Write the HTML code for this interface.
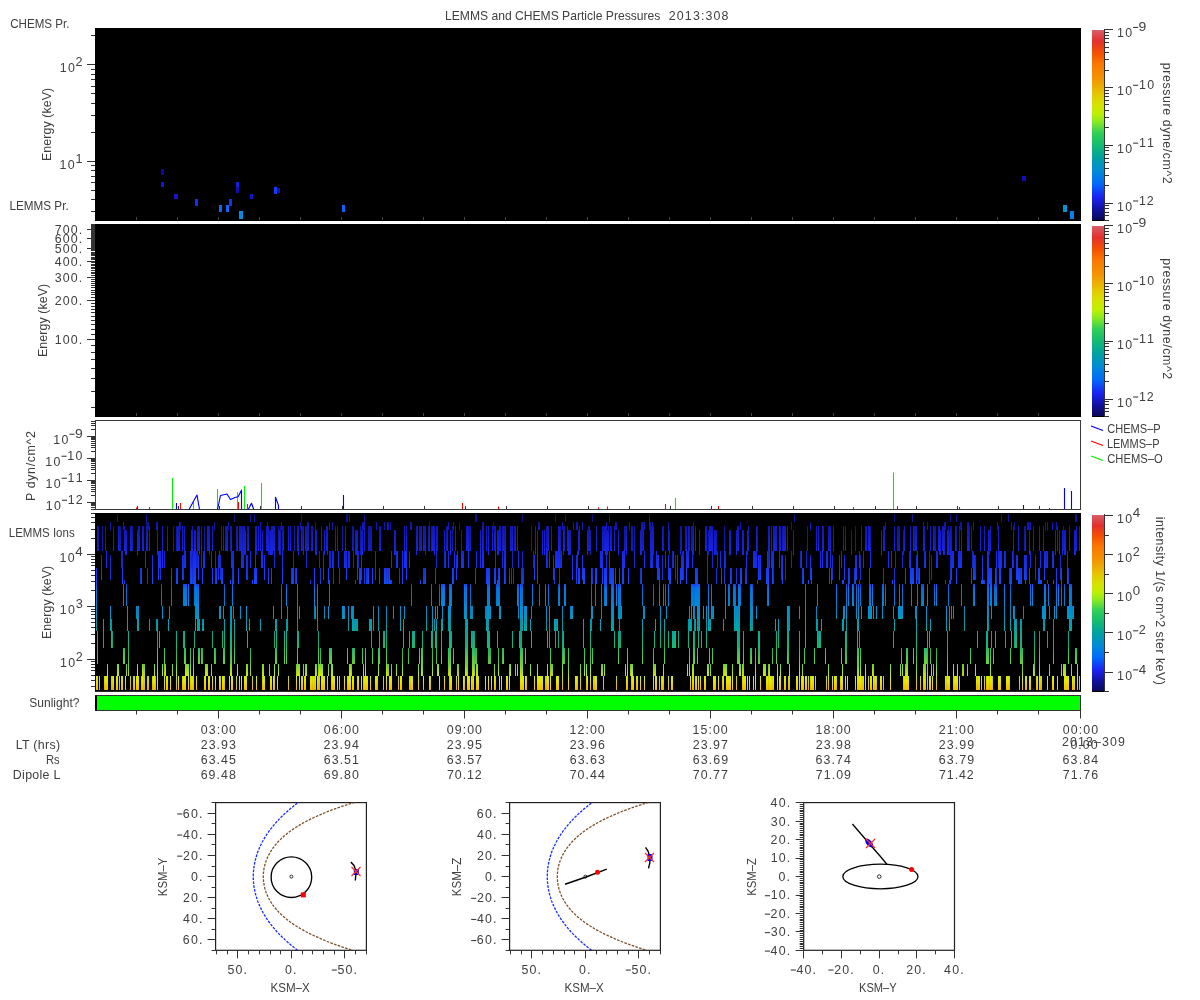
<!DOCTYPE html><html><head><meta charset="utf-8"><style>html,body{margin:0;padding:0;background:#fff;width:1200px;height:1000px;overflow:hidden}svg{display:block;font-family:"Liberation Sans",sans-serif;will-change:transform}</style></head><body>
<svg width="1200" height="1000" viewBox="0 0 1200 1000">
<defs>
<linearGradient id="cb1" gradientUnits="userSpaceOnUse" x1="0" y1="220" x2="0" y2="30">
<stop offset="0.0" stop-color="#0a0a5a"/>
<stop offset="0.05" stop-color="#0f0f96"/>
<stop offset="0.12" stop-color="#1923f5"/>
<stop offset="0.19" stop-color="#0069fa"/>
<stop offset="0.26" stop-color="#008cd7"/>
<stop offset="0.33" stop-color="#00a2a0"/>
<stop offset="0.4" stop-color="#14be6e"/>
<stop offset="0.46" stop-color="#32d055"/>
<stop offset="0.52" stop-color="#8ceb1e"/>
<stop offset="0.56" stop-color="#bef000"/>
<stop offset="0.61" stop-color="#d7e100"/>
<stop offset="0.66" stop-color="#e4c800"/>
<stop offset="0.7" stop-color="#ebaf00"/>
<stop offset="0.75" stop-color="#f59100"/>
<stop offset="0.82" stop-color="#fa7800"/>
<stop offset="0.88" stop-color="#f35000"/>
<stop offset="0.94" stop-color="#e4302d"/>
<stop offset="1.0" stop-color="#d75f69"/>
</linearGradient>
<linearGradient id="cb2" gradientUnits="userSpaceOnUse" x1="0" y1="416" x2="0" y2="226">
<stop offset="0.0" stop-color="#0a0a5a"/>
<stop offset="0.05" stop-color="#0f0f96"/>
<stop offset="0.12" stop-color="#1923f5"/>
<stop offset="0.19" stop-color="#0069fa"/>
<stop offset="0.26" stop-color="#008cd7"/>
<stop offset="0.33" stop-color="#00a2a0"/>
<stop offset="0.4" stop-color="#14be6e"/>
<stop offset="0.46" stop-color="#32d055"/>
<stop offset="0.52" stop-color="#8ceb1e"/>
<stop offset="0.56" stop-color="#bef000"/>
<stop offset="0.61" stop-color="#d7e100"/>
<stop offset="0.66" stop-color="#e4c800"/>
<stop offset="0.7" stop-color="#ebaf00"/>
<stop offset="0.75" stop-color="#f59100"/>
<stop offset="0.82" stop-color="#fa7800"/>
<stop offset="0.88" stop-color="#f35000"/>
<stop offset="0.94" stop-color="#e4302d"/>
<stop offset="1.0" stop-color="#d75f69"/>
</linearGradient>
<linearGradient id="cb4" gradientUnits="userSpaceOnUse" x1="0" y1="691" x2="0" y2="515">
<stop offset="0.0" stop-color="#0a0a5a"/>
<stop offset="0.05" stop-color="#0f0f96"/>
<stop offset="0.12" stop-color="#1923f5"/>
<stop offset="0.19" stop-color="#0069fa"/>
<stop offset="0.26" stop-color="#008cd7"/>
<stop offset="0.33" stop-color="#00a2a0"/>
<stop offset="0.4" stop-color="#14be6e"/>
<stop offset="0.46" stop-color="#32d055"/>
<stop offset="0.52" stop-color="#8ceb1e"/>
<stop offset="0.56" stop-color="#bef000"/>
<stop offset="0.61" stop-color="#d7e100"/>
<stop offset="0.66" stop-color="#e4c800"/>
<stop offset="0.7" stop-color="#ebaf00"/>
<stop offset="0.75" stop-color="#f59100"/>
<stop offset="0.82" stop-color="#fa7800"/>
<stop offset="0.88" stop-color="#f35000"/>
<stop offset="0.94" stop-color="#e4302d"/>
<stop offset="1.0" stop-color="#d75f69"/>
</linearGradient>
</defs>
<rect x="0" y="0" width="1200" height="1000" fill="#fff"/>
<text x="444.99" y="20.00" font-size="12.4" textLength="215.42" lengthAdjust="spacingAndGlyphs" fill="#404040" xml:space="preserve" >LEMMS and CHEMS Particle Pressures</text>
<text x="668.78" y="20.00" font-size="12.4" textLength="59.68" lengthAdjust="spacing" fill="#404040" xml:space="preserve" >2013:308</text>
<rect x="95" y="28" width="986" height="193" fill="#000" />
<text x="10.22" y="28.00" font-size="12.4" textLength="59.18" lengthAdjust="spacingAndGlyphs" fill="#404040" xml:space="preserve" >CHEMS Pr.</text>
<text x="9.42" y="210.00" font-size="12.4" textLength="59.23" lengthAdjust="spacingAndGlyphs" fill="#404040" xml:space="preserve" >LEMMS Pr.</text>
<path stroke="#333" stroke-width="1" fill="none" d="M87 161.5h8M87 64.5h8M91 211.5h4M91 199.5h4M91 190.5h4M91 182.5h4M91 176.5h4M91 170.5h4M91 165.5h4M91 132.5h4M91 115.5h4M91 103.5h4M91 93.5h4M91 86.5h4M91 79.5h4M91 74.5h4M91 69.5h4M91 35.5h4"/>
<text x="59.72" y="72.40" font-size="12.4" textLength="15.17" lengthAdjust="spacing" fill="#404040" xml:space="preserve" >10</text>
<text x="75.59" y="66.40" font-size="12.4" textLength="7.01" lengthAdjust="spacingAndGlyphs" fill="#404040" xml:space="preserve" >2</text>
<text x="59.61" y="168.90" font-size="12.4" textLength="15.17" lengthAdjust="spacing" fill="#404040" xml:space="preserve" >10</text>
<text x="75.59" y="162.90" font-size="12.4" textLength="7.01" lengthAdjust="spacingAndGlyphs" fill="#404040" xml:space="preserve" >1</text>
<g transform="translate(50.50,124.25) rotate(-90)">
<text x="-36.78" y="0.00" font-size="12.4" textLength="73.29" lengthAdjust="spacing" fill="#404040" xml:space="preserve" >Energy (keV)</text>
</g>
<rect x="161" y="169" width="3" height="6" fill="#0a0aaa" />
<rect x="161" y="182" width="3" height="5" fill="#1414e6" />
<rect x="174" y="194" width="4" height="5" fill="#1414d2" />
<rect x="195" y="199" width="3" height="7" fill="#142df5" />
<rect x="219" y="205" width="3" height="7" fill="#1464fa" />
<rect x="226" y="205" width="3" height="7" fill="#1464fa" />
<rect x="229" y="199" width="3" height="7" fill="#1432f5" />
<rect x="236" y="182" width="3" height="5" fill="#141ee6" />
<rect x="236" y="187" width="3" height="6" fill="#0f0fb4" />
<rect x="239" y="211" width="4" height="8" fill="#008ce6" />
<rect x="250" y="194" width="3" height="5" fill="#0f14c8" />
<rect x="274" y="187" width="3" height="7" fill="#143cfa" />
<rect x="277" y="188" width="3" height="5" fill="#0f14aa" />
<rect x="342" y="205" width="3" height="7" fill="#0a64ff" />
<rect x="1022" y="176" width="4" height="5" fill="#0f0fbe" />
<rect x="1063" y="205" width="4" height="7" fill="#0096cd" />
<rect x="1070" y="211" width="4" height="8" fill="#0082f0" />
<path stroke="#444" stroke-width="1" fill="none" d="M136.5 217v3M177.5 217v3M218.5 217v3M259.5 217v3M300.5 217v3M341.5 217v3M382.5 217v3M423.5 217v3M464.5 217v3M505.5 217v3M546.5 217v3M587.5 217v3M628.5 217v3M669.5 217v3M710.5 217v3M751.5 217v3M792.5 217v3M833.5 217v3M874.5 217v3M915.5 217v3M956.5 217v3M997.5 217v3M1038.5 217v3"/>
<rect x="1092" y="30" width="12" height="191" fill="url(#cb1)" />
<rect x="1092" y="220" width="12" height="1" fill="#000" />
<path stroke="#333" stroke-width="1" fill="none" d="M1104.5 29V221M1104 203.5h9M1104 145.5h9M1104 87.5h9M1104 29.5h9M1104 220.5h5M1104 215.5h5M1104 212.5h5M1104 208.5h5M1104 205.5h5M1104 185.5h5M1104 175.5h5M1104 168.5h5M1104 162.5h5M1104 158.5h5M1104 154.5h5M1104 150.5h5M1104 147.5h5M1104 127.5h5M1104 117.5h5M1104 110.5h5M1104 104.5h5M1104 100.5h5M1104 96.5h5M1104 93.5h5M1104 90.5h5M1104 70.5h5M1104 59.5h5M1104 52.5h5M1104 47.5h5M1104 42.5h5M1104 38.5h5M1104 35.5h5M1104 32.5h5"/>
<text x="1116.93" y="37.10" font-size="12.4" textLength="15.17" lengthAdjust="spacing" fill="#404040" xml:space="preserve" >10</text>
<rect x="1133.10" y="26.90" width="5.1" height="1.1" fill="#404040"/>
<text x="1138.54" y="31.10" font-size="12.4" textLength="7.77" lengthAdjust="spacingAndGlyphs" fill="#404040" xml:space="preserve" >9</text>
<text x="1116.93" y="94.95" font-size="12.4" textLength="15.17" lengthAdjust="spacing" fill="#404040" xml:space="preserve" >10</text>
<rect x="1133.10" y="84.75" width="5.1" height="1.1" fill="#404040"/>
<text x="1138.93" y="88.95" font-size="12.4" textLength="15.17" lengthAdjust="spacing" fill="#404040" xml:space="preserve" >10</text>
<text x="1116.93" y="152.80" font-size="12.4" textLength="15.17" lengthAdjust="spacing" fill="#404040" xml:space="preserve" >10</text>
<rect x="1133.10" y="142.60" width="5.1" height="1.1" fill="#404040"/>
<text x="1138.93" y="146.80" font-size="12.4" textLength="14.96" lengthAdjust="spacing" fill="#404040" xml:space="preserve" >11</text>
<text x="1116.93" y="210.65" font-size="12.4" textLength="15.17" lengthAdjust="spacing" fill="#404040" xml:space="preserve" >10</text>
<rect x="1133.10" y="200.45" width="5.1" height="1.1" fill="#404040"/>
<text x="1138.93" y="204.65" font-size="12.4" textLength="14.85" lengthAdjust="spacing" fill="#404040" xml:space="preserve" >12</text>
<g transform="translate(1163.30,123.45) rotate(90)">
<text x="-60.58" y="0.00" font-size="12.4" textLength="120.92" lengthAdjust="spacing" fill="#404040" xml:space="preserve" >pressure dyne/cm^2</text>
</g>
<rect x="95" y="224" width="986" height="193" fill="#000" />
<path stroke="#333" stroke-width="1" fill="none" d="M91 407.5h4M91 391.5h4M91 378.5h4M91 368.5h4M91 359.5h4M91 352.5h4M91 345.5h4M87 339.5h8M91 334.5h4M91 329.5h4M91 324.5h4M91 320.5h4M91 316.5h4M91 312.5h4M91 309.5h4M91 306.5h4M91 303.5h4M87 300.5h8M91 297.5h4M91 294.5h4M91 292.5h4M91 290.5h4M91 287.5h4M91 285.5h4M91 283.5h4M91 281.5h4M91 279.5h4M87 277.5h8M91 275.5h4M91 273.5h4M91 272.5h4M91 270.5h4M91 268.5h4M91 267.5h4M91 265.5h4M91 264.5h4M91 262.5h4M87 261.5h8M91 259.5h4M91 258.5h4M91 257.5h4M91 255.5h4M91 254.5h4M91 253.5h4M91 252.5h4M91 250.5h4M91 249.5h4M87 248.5h8M91 247.5h4M91 246.5h4M91 245.5h4M91 244.5h4M91 243.5h4M91 242.5h4M91 241.5h4M91 240.5h4M91 239.5h4M87 238.5h8M91 237.5h4M91 236.5h4M91 235.5h4M91 234.5h4M91 233.5h4M91 232.5h4M91 232.5h4M91 231.5h4M91 230.5h4M87 229.5h8M91 228.5h4M91 228.5h4M91 227.5h4M91 226.5h4M91 225.5h4M91 224.5h4"/>
<text x="54.85" y="234.34" font-size="12.4" textLength="27.39" lengthAdjust="spacing" fill="#404040" xml:space="preserve" >700.</text>
<text x="54.65" y="243.04" font-size="12.4" textLength="27.60" lengthAdjust="spacing" fill="#404040" xml:space="preserve" >600.</text>
<text x="54.85" y="253.33" font-size="12.4" textLength="27.39" lengthAdjust="spacing" fill="#404040" xml:space="preserve" >500.</text>
<text x="54.74" y="265.93" font-size="12.4" textLength="27.50" lengthAdjust="spacing" fill="#404040" xml:space="preserve" >400.</text>
<text x="54.85" y="282.17" font-size="12.4" textLength="27.39" lengthAdjust="spacing" fill="#404040" xml:space="preserve" >300.</text>
<text x="54.75" y="305.07" font-size="12.4" textLength="27.49" lengthAdjust="spacing" fill="#404040" xml:space="preserve" >200.</text>
<text x="54.86" y="344.20" font-size="12.4" textLength="27.38" lengthAdjust="spacing" fill="#404040" xml:space="preserve" >100.</text>
<g transform="translate(46.50,320.25) rotate(-90)">
<text x="-36.78" y="0.00" font-size="12.4" textLength="73.29" lengthAdjust="spacing" fill="#404040" xml:space="preserve" >Energy (keV)</text>
</g>
<path stroke="#444" stroke-width="1" fill="none" d="M136.5 413v3M177.5 413v3M218.5 413v3M259.5 413v3M300.5 413v3M341.5 413v3M382.5 413v3M423.5 413v3M464.5 413v3M505.5 413v3M546.5 413v3M587.5 413v3M628.5 413v3M669.5 413v3M710.5 413v3M751.5 413v3M792.5 413v3M833.5 413v3M874.5 413v3M915.5 413v3M956.5 413v3M997.5 413v3M1038.5 413v3"/>
<rect x="1092" y="226" width="12" height="191" fill="url(#cb2)" />
<rect x="1092" y="416" width="12" height="1" fill="#000" />
<path stroke="#333" stroke-width="1" fill="none" d="M1104.5 225V417M1104 399.5h9M1104 341.5h9M1104 283.5h9M1104 225.5h9M1104 416.5h5M1104 411.5h5M1104 408.5h5M1104 404.5h5M1104 401.5h5M1104 381.5h5M1104 371.5h5M1104 364.5h5M1104 358.5h5M1104 354.5h5M1104 350.5h5M1104 346.5h5M1104 343.5h5M1104 323.5h5M1104 313.5h5M1104 306.5h5M1104 300.5h5M1104 296.5h5M1104 292.5h5M1104 289.5h5M1104 286.5h5M1104 266.5h5M1104 255.5h5M1104 248.5h5M1104 243.5h5M1104 238.5h5M1104 234.5h5M1104 231.5h5M1104 228.5h5"/>
<text x="1116.93" y="233.10" font-size="12.4" textLength="15.17" lengthAdjust="spacing" fill="#404040" xml:space="preserve" >10</text>
<rect x="1133.10" y="222.90" width="5.1" height="1.1" fill="#404040"/>
<text x="1138.54" y="227.10" font-size="12.4" textLength="7.77" lengthAdjust="spacingAndGlyphs" fill="#404040" xml:space="preserve" >9</text>
<text x="1116.93" y="290.95" font-size="12.4" textLength="15.17" lengthAdjust="spacing" fill="#404040" xml:space="preserve" >10</text>
<rect x="1133.10" y="280.75" width="5.1" height="1.1" fill="#404040"/>
<text x="1138.93" y="284.95" font-size="12.4" textLength="15.17" lengthAdjust="spacing" fill="#404040" xml:space="preserve" >10</text>
<text x="1116.93" y="348.80" font-size="12.4" textLength="15.17" lengthAdjust="spacing" fill="#404040" xml:space="preserve" >10</text>
<rect x="1133.10" y="338.60" width="5.1" height="1.1" fill="#404040"/>
<text x="1138.93" y="342.80" font-size="12.4" textLength="14.96" lengthAdjust="spacing" fill="#404040" xml:space="preserve" >11</text>
<text x="1116.93" y="406.65" font-size="12.4" textLength="15.17" lengthAdjust="spacing" fill="#404040" xml:space="preserve" >10</text>
<rect x="1133.10" y="396.45" width="5.1" height="1.1" fill="#404040"/>
<text x="1138.93" y="400.65" font-size="12.4" textLength="14.85" lengthAdjust="spacing" fill="#404040" xml:space="preserve" >12</text>
<g transform="translate(1163.30,318.90) rotate(90)">
<text x="-60.58" y="0.00" font-size="12.4" textLength="120.92" lengthAdjust="spacing" fill="#404040" xml:space="preserve" >pressure dyne/cm^2</text>
</g>
<rect x="95.5" y="420.5" width="985" height="89" fill="#fff" stroke="#3a3a3a" stroke-width="1"/>
<path stroke="#333" stroke-width="1" fill="none" d="M87 502.5h8M87 480.5h8M87 458.5h8M87 436.5h8M91 509.5h4M91 507.5h4M91 505.5h4M91 504.5h4M91 503.5h4M91 495.5h4M91 491.5h4M91 489.5h4M91 487.5h4M91 485.5h4M91 483.5h4M91 482.5h4M91 481.5h4M91 473.5h4M91 469.5h4M91 467.5h4M91 465.5h4M91 463.5h4M91 461.5h4M91 460.5h4M91 459.5h4M91 451.5h4M91 447.5h4M91 445.5h4M91 443.5h4M91 441.5h4M91 439.5h4M91 438.5h4M91 437.5h4M91 429.5h4M91 425.5h4M91 423.5h4M91 421.5h4"/>
<text x="53.30" y="443.90" font-size="12.4" textLength="15.17" lengthAdjust="spacing" fill="#404040" xml:space="preserve" >10</text>
<rect x="69.46" y="433.70" width="5.1" height="1.1" fill="#404040"/>
<text x="74.90" y="437.90" font-size="12.4" textLength="7.77" lengthAdjust="spacingAndGlyphs" fill="#404040" xml:space="preserve" >9</text>
<text x="45.30" y="465.90" font-size="12.4" textLength="15.17" lengthAdjust="spacing" fill="#404040" xml:space="preserve" >10</text>
<rect x="61.46" y="455.70" width="5.1" height="1.1" fill="#404040"/>
<text x="67.29" y="459.90" font-size="12.4" textLength="15.17" lengthAdjust="spacing" fill="#404040" xml:space="preserve" >10</text>
<text x="45.61" y="487.90" font-size="12.4" textLength="15.17" lengthAdjust="spacing" fill="#404040" xml:space="preserve" >10</text>
<rect x="61.77" y="477.70" width="5.1" height="1.1" fill="#404040"/>
<text x="67.61" y="481.90" font-size="12.4" textLength="14.96" lengthAdjust="spacing" fill="#404040" xml:space="preserve" >11</text>
<text x="45.72" y="509.90" font-size="12.4" textLength="15.17" lengthAdjust="spacing" fill="#404040" xml:space="preserve" >10</text>
<rect x="61.88" y="499.70" width="5.1" height="1.1" fill="#404040"/>
<text x="67.71" y="503.90" font-size="12.4" textLength="14.85" lengthAdjust="spacing" fill="#404040" xml:space="preserve" >12</text>
<g transform="translate(35.00,465.90) rotate(-90)">
<text x="-35.23" y="0.00" font-size="12.4" textLength="70.06" lengthAdjust="spacing" fill="#404040" xml:space="preserve" >P dyn/cm^2</text>
</g>
<path stroke="#333" stroke-width="1" fill="none" d="M137.5 506v3M178.5 506v3M219.5 506v3M260.5 506v3M301.5 506v3M342.5 506v3M383.5 506v3M424.5 506v3M465.5 506v3M506.5 506v3M547.5 506v3M588.5 506v3M629.5 506v3M670.5 506v3M711.5 506v3M752.5 506v3M793.5 506v3M834.5 506v3M875.5 506v3M916.5 506v3M957.5 506v3M998.5 506v3M1039.5 506v3"/>
<path stroke="#00ee00" stroke-width="1.1" fill="none" d="M172.5 478V509M193.5 502V509M217.5 489V509M237.5 492V509M244.5 486V509M261.5 483V509M675.5 498V509M893.5 472.5V509"/>
<path stroke="#ff0000" stroke-width="1.1" fill="none" d="M136.5 507.5V509M149.5 507V509M180.5 503V509M238.5 502V509M247.5 504V509M462.5 503V509M498.5 506.5V509M598.5 507.5V509M607.5 506.5V509M665.5 504V509M718.5 506V509M853.5 507V509M897.5 506V509M959.5 507V509M1049.5 508V509"/>
<path stroke="#0000ff" stroke-width="1.1" fill="none" d="M176.5 503V509M343.5 495V509M1023.5 505V509M1064.5 488V509M1071.5 491V509"/>
<polyline fill="none" stroke="#0000ff" stroke-width="1.15" stroke-linejoin="round" points="189,509.5 197,495 199.5,509.5"/>
<polyline fill="none" stroke="#0000ff" stroke-width="1.15" stroke-linejoin="round" points="217.5,509.5 220.5,495.5 227,494 230.5,499.5 235,497.5 238.1,496.7 241.5,490.2 241.5,509.5"/>
<polyline fill="none" stroke="#0000ff" stroke-width="1.15" stroke-linejoin="round" points="248.3,509.5 251.5,503.3 253.8,509.5"/>
<polyline fill="none" stroke="#0000ff" stroke-width="1.15" stroke-linejoin="round" points="275.5,509.5 275.5,497.3 278.5,505.4 278.5,509.5"/>
<line x1="1091" y1="426" x2="1103" y2="430.5" stroke="#0000ff" stroke-width="1.3"/>
<text x="1107.25" y="433.10" font-size="12.4" textLength="53.42" lengthAdjust="spacingAndGlyphs" fill="#404040" xml:space="preserve" >CHEMS–P</text>
<line x1="1091" y1="441" x2="1103" y2="445.5" stroke="#ff0000" stroke-width="1.3"/>
<text x="1106.88" y="447.95" font-size="12.4" textLength="52.61" lengthAdjust="spacingAndGlyphs" fill="#404040" xml:space="preserve" >LEMMS–P</text>
<line x1="1091" y1="456" x2="1103" y2="460.5" stroke="#00ee00" stroke-width="1.3"/>
<text x="1107.24" y="462.80" font-size="12.4" textLength="55.38" lengthAdjust="spacingAndGlyphs" fill="#404040" xml:space="preserve" >CHEMS–O</text>
<rect x="95" y="513" width="986" height="178" fill="#000" />
<rect x="95" y="691" width="986" height="1" fill="#2a2a2a" />
<path stroke="#333" stroke-width="1" fill="none" d="M87 659.5h8M87 606.5h8M87 554.5h8M91 686.5h4M91 680.5h4M91 675.5h4M91 670.5h4M91 667.5h4M91 664.5h4M91 661.5h4M91 643.5h4M91 634.5h4M91 627.5h4M91 622.5h4M91 618.5h4M91 614.5h4M91 611.5h4M91 609.5h4M91 590.5h4M91 581.5h4M91 575.5h4M91 570.5h4M91 565.5h4M91 562.5h4M91 559.5h4M91 556.5h4M91 538.5h4M91 529.5h4M91 522.5h4M91 517.5h4M91 513.5h4"/>
<text x="59.38" y="561.80" font-size="12.4" textLength="15.17" lengthAdjust="spacing" fill="#404040" xml:space="preserve" >10</text>
<text x="75.24" y="555.80" font-size="12.4" textLength="7.47" lengthAdjust="spacingAndGlyphs" fill="#404040" xml:space="preserve" >4</text>
<text x="59.70" y="614.30" font-size="12.4" textLength="15.17" lengthAdjust="spacing" fill="#404040" xml:space="preserve" >10</text>
<text x="75.68" y="608.30" font-size="12.4" textLength="7.13" lengthAdjust="spacingAndGlyphs" fill="#404040" xml:space="preserve" >3</text>
<text x="60.02" y="666.80" font-size="12.4" textLength="15.17" lengthAdjust="spacing" fill="#404040" xml:space="preserve" >10</text>
<text x="75.89" y="660.80" font-size="12.4" textLength="7.01" lengthAdjust="spacingAndGlyphs" fill="#404040" xml:space="preserve" >2</text>
<g transform="translate(50.50,602.25) rotate(-90)">
<text x="-36.78" y="0.00" font-size="12.4" textLength="73.29" lengthAdjust="spacing" fill="#404040" xml:space="preserve" >Energy (keV)</text>
</g>
<text x="8.79" y="536.70" font-size="12.4" textLength="65.89" lengthAdjust="spacingAndGlyphs" fill="#404040" xml:space="preserve" >LEMMS Ions</text>
<rect x="1092" y="515" width="12" height="177" fill="url(#cb4)" />
<rect x="1092" y="691" width="12" height="1" fill="#000" />
<path stroke="#333" stroke-width="1" fill="none" d="M1104.5 514V692M1104 691.5h5M1104 672.5h9M1104 652.5h5M1104 632.5h9M1104 613.5h5M1104 593.5h9M1104 574.5h5M1104 554.5h9M1104 535.5h5M1104 515.5h9"/>
<text x="1116.93" y="523.10" font-size="12.4" textLength="15.17" lengthAdjust="spacing" fill="#404040" xml:space="preserve" >10</text>
<text x="1132.79" y="517.10" font-size="12.4" textLength="7.47" lengthAdjust="spacingAndGlyphs" fill="#404040" xml:space="preserve" >4</text>
<text x="1116.93" y="562.21" font-size="12.4" textLength="15.17" lengthAdjust="spacing" fill="#404040" xml:space="preserve" >10</text>
<text x="1132.81" y="556.21" font-size="12.4" textLength="7.01" lengthAdjust="spacingAndGlyphs" fill="#404040" xml:space="preserve" >2</text>
<text x="1116.93" y="601.32" font-size="12.4" textLength="15.17" lengthAdjust="spacing" fill="#404040" xml:space="preserve" >10</text>
<text x="1132.79" y="595.32" font-size="12.4" textLength="7.38" lengthAdjust="spacingAndGlyphs" fill="#404040" xml:space="preserve" >0</text>
<text x="1116.93" y="640.44" font-size="12.4" textLength="15.17" lengthAdjust="spacing" fill="#404040" xml:space="preserve" >10</text>
<rect x="1133.10" y="630.24" width="5.1" height="1.1" fill="#404040"/>
<text x="1138.81" y="634.44" font-size="12.4" textLength="7.01" lengthAdjust="spacingAndGlyphs" fill="#404040" xml:space="preserve" >2</text>
<text x="1116.93" y="679.55" font-size="12.4" textLength="15.17" lengthAdjust="spacing" fill="#404040" xml:space="preserve" >10</text>
<rect x="1133.10" y="669.35" width="5.1" height="1.1" fill="#404040"/>
<text x="1138.79" y="673.55" font-size="12.4" textLength="7.47" lengthAdjust="spacingAndGlyphs" fill="#404040" xml:space="preserve" >4</text>
<g transform="translate(1156.40,600.80) rotate(90)">
<text x="-84.03" y="0.00" font-size="12.4" textLength="168.00" lengthAdjust="spacing" fill="#404040" xml:space="preserve" >intensity 1/(s cm^2 ster keV)</text>
</g>
<defs><linearGradient id="g4" gradientUnits="userSpaceOnUse" x1="0" y1="514" x2="0" y2="690">
<stop offset="0" stop-color="#0f0f8c"/>
<stop offset="0.07" stop-color="#1216b9"/>
<stop offset="0.2" stop-color="#1623e1"/>
<stop offset="0.3" stop-color="#1932f5"/>
<stop offset="0.4" stop-color="#144bff"/>
<stop offset="0.42" stop-color="#0073f0"/>
<stop offset="0.55" stop-color="#0091d2"/>
<stop offset="0.65" stop-color="#00a8a8"/>
<stop offset="0.75" stop-color="#14bc78"/>
<stop offset="0.85" stop-color="#6ed437"/>
<stop offset="0.91" stop-color="#c8e80a"/>
<stop offset="0.95" stop-color="#e8e600"/>
<stop offset="1.0" stop-color="#f2b900"/>
</linearGradient>
<linearGradient id="g4d" gradientUnits="userSpaceOnUse" x1="0" y1="514" x2="0" y2="690">
<stop offset="0" stop-color="#0d0d78"/>
<stop offset="0.07" stop-color="#0f139f"/>
<stop offset="0.2" stop-color="#131ec2"/>
<stop offset="0.3" stop-color="#162bd3"/>
<stop offset="0.4" stop-color="#1140db"/>
<stop offset="0.42" stop-color="#006bdf"/>
<stop offset="0.55" stop-color="#0087c3"/>
<stop offset="0.65" stop-color="#009c9c"/>
<stop offset="0.75" stop-color="#13af70"/>
<stop offset="0.85" stop-color="#66c533"/>
<stop offset="0.91" stop-color="#bad809"/>
<stop offset="0.95" stop-color="#d8d600"/>
<stop offset="1.0" stop-color="#e1ac00"/>
</linearGradient></defs>
<path fill="url(#g4d)" d="M234 514h1v8h-1zM301 514h1v8h-1zM347 514h1v8h-1zM475 514h1v8h-1zM522 514h1v8h-1zM592 514h1v8h-1zM894 514h1v8h-1zM146 522h1v8h-1zM147 522h1v8h-1zM148 522h1v8h-1zM180 522h1v8h-1zM214 522h1v8h-1zM228 522h1v8h-1zM300 522h1v8h-1zM315 522h1v8h-1zM390 522h1v8h-1zM429 522h1v8h-1zM459 522h1v8h-1zM482 522h1v8h-1zM493 522h1v8h-1zM643 522h1v8h-1zM668 522h1v8h-1zM791 522h1v8h-1zM960 522h1v8h-1zM967 522h1v8h-1zM997 522h1v8h-1zM1014 522h1v8h-1zM1029 522h1v8h-1zM1045 522h1v8h-1zM98 526h1v25h-1zM102 526h1v25h-1zM105 526h1v25h-1zM119 526h1v25h-1zM120 526h1v25h-1zM132 526h1v25h-1zM173 526h1v25h-1zM176 526h1v25h-1zM201 526h1v25h-1zM204 526h1v25h-1zM225 526h1v25h-1zM230 526h1v25h-1zM236 526h1v25h-1zM242 526h1v25h-1zM247 526h1v25h-1zM278 526h1v25h-1zM280 526h1v25h-1zM282 526h1v25h-1zM294 526h1v25h-1zM298 526h1v25h-1zM302 526h1v25h-1zM306 526h1v25h-1zM308 526h1v25h-1zM311 526h1v25h-1zM342 526h1v25h-1zM352 526h1v25h-1zM353 526h1v25h-1zM360 526h1v25h-1zM368 526h1v25h-1zM369 526h1v25h-1zM370 526h1v25h-1zM371 526h1v25h-1zM379 526h1v25h-1zM406 526h1v25h-1zM419 526h1v25h-1zM420 526h1v25h-1zM424 526h1v25h-1zM428 526h1v25h-1zM431 526h1v25h-1zM434 526h1v25h-1zM437 526h1v25h-1zM446 526h1v25h-1zM452 526h1v25h-1zM469 526h1v25h-1zM470 526h1v25h-1zM483 526h1v25h-1zM499 526h1v25h-1zM502 526h1v25h-1zM504 526h1v25h-1zM511 526h1v25h-1zM514 526h1v25h-1zM531 526h1v25h-1zM546 526h1v25h-1zM547 526h1v25h-1zM560 526h1v25h-1zM563 526h1v25h-1zM588 526h1v25h-1zM603 526h1v25h-1zM611 526h1v25h-1zM624 526h1v25h-1zM625 526h1v25h-1zM631 526h1v25h-1zM632 526h1v25h-1zM634 526h1v25h-1zM642 526h1v25h-1zM663 526h1v25h-1zM680 526h1v25h-1zM681 526h1v25h-1zM685 526h1v25h-1zM689 526h1v25h-1zM691 526h1v25h-1zM692 526h1v25h-1zM724 526h1v25h-1zM757 526h1v25h-1zM782 526h1v25h-1zM807 526h1v25h-1zM828 526h1v25h-1zM829 526h1v25h-1zM855 526h1v25h-1zM865 526h1v25h-1zM870 526h1v25h-1zM897 526h1v25h-1zM898 526h1v25h-1zM899 526h1v25h-1zM914 526h1v25h-1zM934 526h1v25h-1zM935 526h1v25h-1zM948 526h1v25h-1zM950 526h1v25h-1zM951 526h1v25h-1zM956 526h1v25h-1zM959 526h1v25h-1zM969 526h1v25h-1zM971 526h1v25h-1zM1024 526h1v25h-1zM1063 526h1v25h-1zM209 530h1v25h-1zM243 530h1v25h-1zM256 530h1v25h-1zM268 530h1v25h-1zM269 530h1v25h-1zM272 530h1v25h-1zM280 530h1v25h-1zM327 530h1v25h-1zM355 530h1v25h-1zM360 530h1v25h-1zM361 530h1v25h-1zM425 530h1v25h-1zM461 530h1v25h-1zM570 530h1v25h-1zM590 530h1v25h-1zM626 530h1v25h-1zM653 530h1v25h-1zM669 530h1v25h-1zM680 530h1v25h-1zM708 530h1v25h-1zM715 530h1v25h-1zM716 530h1v25h-1zM768 530h1v25h-1zM851 530h1v25h-1zM903 530h1v25h-1zM949 530h1v25h-1zM989 530h1v25h-1zM121 551h1v17h-1zM122 551h1v17h-1zM164 551h1v17h-1zM191 551h1v17h-1zM192 551h1v17h-1zM196 551h1v17h-1zM197 551h1v17h-1zM201 551h1v17h-1zM215 551h1v17h-1zM242 551h1v17h-1zM274 551h1v17h-1zM293 551h1v17h-1zM306 551h1v17h-1zM319 551h1v17h-1zM323 551h1v17h-1zM329 551h1v17h-1zM330 551h1v17h-1zM333 551h1v17h-1zM345 551h1v17h-1zM349 551h1v17h-1zM353 551h1v17h-1zM358 551h1v17h-1zM436 551h1v17h-1zM444 551h1v17h-1zM502 551h1v17h-1zM512 551h1v17h-1zM522 551h1v17h-1zM533 551h1v17h-1zM547 551h1v17h-1zM560 551h1v17h-1zM634 551h1v17h-1zM650 551h1v17h-1zM672 551h1v17h-1zM682 551h1v17h-1zM712 551h1v17h-1zM717 551h1v17h-1zM725 551h1v17h-1zM755 551h1v17h-1zM768 551h1v17h-1zM791 551h1v17h-1zM800 551h1v17h-1zM806 551h1v17h-1zM895 551h1v17h-1zM902 551h1v17h-1zM909 551h1v17h-1zM929 551h1v17h-1zM972 551h1v17h-1zM973 551h1v17h-1zM998 551h1v17h-1zM1005 551h1v17h-1zM1013 551h1v17h-1zM1046 551h1v17h-1zM110 555h1v25h-1zM160 555h1v25h-1zM183 555h1v25h-1zM218 555h1v25h-1zM220 555h1v25h-1zM247 555h1v25h-1zM375 555h1v25h-1zM662 555h1v25h-1zM675 555h1v25h-1zM683 555h1v25h-1zM759 555h1v25h-1zM781 555h1v25h-1zM785 555h1v25h-1zM832 555h1v25h-1zM860 555h1v25h-1zM917 555h1v25h-1zM931 555h1v25h-1zM950 555h1v25h-1zM975 555h1v25h-1zM1026 555h1v25h-1zM1035 555h1v25h-1zM1060 555h1v25h-1zM140 568h1v16h-1zM147 568h1v16h-1zM192 568h1v16h-1zM215 568h1v16h-1zM221 568h1v16h-1zM291 568h1v16h-1zM295 568h1v16h-1zM320 568h1v16h-1zM339 568h1v16h-1zM364 568h1v16h-1zM366 568h1v16h-1zM367 568h1v16h-1zM386 568h1v16h-1zM388 568h1v16h-1zM399 568h1v16h-1zM423 568h1v16h-1zM424 568h1v16h-1zM505 568h1v16h-1zM511 568h1v16h-1zM513 568h1v16h-1zM554 568h1v16h-1zM559 568h1v16h-1zM576 568h1v16h-1zM592 568h1v16h-1zM609 568h1v16h-1zM640 568h1v16h-1zM707 568h1v16h-1zM716 568h1v16h-1zM724 568h1v16h-1zM731 568h1v16h-1zM736 568h1v16h-1zM745 568h1v16h-1zM746 568h1v16h-1zM773 568h1v16h-1zM849 568h1v16h-1zM854 568h1v16h-1zM918 568h1v16h-1zM929 568h1v16h-1zM996 568h1v16h-1zM1009 568h1v16h-1zM1019 568h1v16h-1zM1020 568h1v16h-1zM1068 568h1v16h-1zM124 580h1v4h-1zM310 580h1v4h-1zM355 580h1v4h-1zM391 580h1v4h-1zM757 580h1v4h-1zM773 580h1v4h-1zM859 580h1v4h-1zM945 580h1v4h-1zM949 580h1v4h-1zM984 580h1v4h-1zM1047 580h1v4h-1zM923 664h1v12h-1zM925 664h1v12h-1zM923 676h1v14h-1zM925 676h1v14h-1zM603 676h1v14h-1zM1010 584h1v22h-1zM1010 606h1v13h-1zM442 584h1v22h-1zM138 606h1v13h-1zM1071 584h1v22h-1zM1071 606h1v13h-1zM202 619h1v12h-1zM211 664h1v12h-1zM411 584h1v22h-1zM521 619h1v12h-1zM643 606h1v13h-1zM562 606h1v13h-1zM562 619h1v12h-1zM562 631h1v17h-1zM562 648h1v16h-1zM562 676h1v14h-1zM883 568h1v16h-1zM869 584h1v22h-1zM169 606h1v13h-1zM373 619h1v12h-1zM103 631h1v17h-1zM973 584h1v22h-1zM706 619h1v12h-1zM836 606h1v13h-1zM750 584h1v22h-1zM752 584h1v22h-1zM750 606h1v13h-1zM751 619h1v12h-1zM752 619h1v12h-1zM287 606h1v13h-1zM161 584h1v22h-1zM691 619h1v12h-1zM1049 664h1v12h-1zM539 584h1v22h-1zM286 619h1v12h-1zM286 631h1v17h-1zM856 584h1v22h-1zM857 619h1v12h-1zM857 664h1v12h-1zM143 664h1v12h-1zM144 664h1v12h-1zM143 676h1v14h-1zM144 676h1v14h-1zM564 648h1v16h-1zM927 648h1v16h-1zM927 664h1v12h-1zM927 676h1v14h-1zM472 631h1v17h-1zM474 631h1v17h-1zM474 648h1v16h-1zM472 664h1v12h-1zM474 664h1v12h-1zM472 676h1v14h-1zM190 648h1v16h-1zM190 676h1v14h-1zM351 606h1v13h-1zM353 606h1v13h-1zM354 619h1v12h-1zM653 648h1v16h-1zM531 606h1v13h-1zM111 619h1v12h-1zM112 631h1v17h-1zM521 568h1v16h-1zM522 568h1v16h-1zM523 568h1v16h-1zM521 584h1v22h-1zM522 584h1v22h-1zM520 619h1v12h-1zM521 619h1v12h-1zM520 631h1v17h-1zM521 631h1v17h-1zM521 648h1v16h-1zM522 648h1v16h-1zM521 664h1v12h-1zM694 631h1v17h-1zM694 648h1v16h-1zM378 606h1v13h-1zM378 619h1v12h-1zM921 584h1v22h-1zM922 584h1v22h-1zM664 631h1v17h-1zM663 676h1v14h-1zM434 619h1v12h-1zM738 606h1v13h-1zM486 606h1v13h-1zM488 619h1v12h-1zM488 648h1v16h-1zM489 648h1v16h-1zM490 648h1v16h-1zM548 584h1v22h-1zM549 619h1v12h-1zM549 631h1v17h-1zM550 664h1v12h-1zM177 568h1v16h-1zM432 648h1v16h-1zM698 619h1v12h-1zM426 606h1v13h-1zM654 664h1v12h-1zM402 648h1v16h-1zM439 584h1v22h-1zM136 606h1v13h-1zM137 606h1v13h-1zM356 619h1v12h-1zM905 664h1v12h-1zM906 676h1v14h-1zM618 606h1v13h-1zM619 619h1v12h-1zM619 631h1v17h-1zM987 568h1v16h-1zM987 584h1v22h-1zM988 606h1v13h-1zM988 619h1v12h-1zM987 631h1v17h-1zM987 648h1v16h-1zM772 648h1v16h-1zM816 606h1v13h-1zM901 648h1v16h-1zM408 648h1v16h-1zM546 619h1v12h-1zM281 584h1v22h-1zM1043 619h1v12h-1zM936 648h1v16h-1zM936 676h1v14h-1zM740 584h1v22h-1zM738 606h1v13h-1zM739 619h1v12h-1zM738 631h1v17h-1zM739 631h1v17h-1zM498 584h1v22h-1zM499 584h1v22h-1zM352 648h1v16h-1zM354 648h1v16h-1zM604 584h1v22h-1zM789 606h1v13h-1zM788 619h1v12h-1zM789 619h1v12h-1zM1021 619h1v12h-1zM1020 631h1v17h-1zM1021 648h1v16h-1zM618 584h1v22h-1zM619 584h1v22h-1zM620 606h1v13h-1zM572 606h1v13h-1zM1016 619h1v12h-1zM1014 631h1v17h-1zM894 568h1v16h-1zM894 584h1v22h-1zM157 631h1v17h-1zM157 664h1v12h-1zM733 584h1v22h-1zM735 584h1v22h-1zM735 606h1v13h-1zM736 606h1v13h-1zM735 619h1v12h-1zM846 584h1v22h-1zM846 619h1v12h-1zM846 631h1v17h-1zM846 648h1v16h-1zM498 648h1v16h-1zM185 584h1v22h-1zM885 584h1v22h-1zM96 619h1v12h-1zM97 648h1v16h-1zM140 568h1v16h-1zM344 606h1v13h-1zM1053 619h1v12h-1zM1053 631h1v17h-1zM1053 648h1v16h-1zM232 568h1v16h-1zM233 606h1v13h-1zM234 631h1v17h-1zM518 584h1v22h-1zM518 606h1v13h-1zM930 648h1v16h-1zM931 664h1v12h-1zM1014 606h1v13h-1zM618 631h1v17h-1zM470 606h1v13h-1zM471 606h1v13h-1zM472 606h1v13h-1zM697 619h1v12h-1zM1023 606h1v13h-1zM371 619h1v12h-1zM371 631h1v17h-1zM333 568h1v16h-1zM370 619h1v12h-1zM962 664h1v12h-1zM1056 606h1v13h-1zM890 664h1v12h-1zM558 584h1v22h-1zM499 584h1v22h-1zM297 619h1v12h-1zM296 664h1v12h-1zM766 568h1v16h-1zM767 584h1v22h-1zM768 584h1v22h-1zM473 648h1v16h-1zM787 631h1v17h-1zM787 648h1v16h-1zM788 648h1v16h-1zM570 606h1v13h-1zM583 631h1v17h-1zM556 619h1v12h-1zM320 664h1v12h-1zM1061 584h1v22h-1zM485 606h1v13h-1zM709 619h1v12h-1zM275 648h1v16h-1zM317 619h1v12h-1zM318 631h1v17h-1zM844 606h1v13h-1zM183 631h1v17h-1zM1022 664h1v12h-1zM698 619h1v12h-1zM250 648h1v16h-1zM990 648h1v16h-1zM990 676h1v14h-1zM331 676h1v14h-1zM591 619h1v12h-1zM1004 606h1v13h-1zM558 631h1v17h-1zM991 631h1v17h-1zM990 664h1v12h-1zM989 676h1v14h-1zM1039 631h1v17h-1zM848 568h1v16h-1zM934 584h1v22h-1zM1034 631h1v17h-1zM1034 648h1v16h-1zM611 584h1v22h-1zM612 584h1v22h-1zM613 584h1v22h-1zM611 606h1v13h-1zM465 584h1v22h-1zM465 619h1v12h-1zM465 631h1v17h-1zM466 631h1v17h-1zM467 664h1v12h-1zM274 631h1v17h-1zM601 606h1v13h-1zM964 606h1v13h-1zM964 619h1v12h-1zM224 584h1v22h-1zM164 664h1v12h-1zM436 648h1v16h-1zM660 631h1v17h-1zM693 584h1v22h-1zM694 584h1v22h-1zM694 606h1v13h-1zM694 619h1v12h-1zM694 631h1v17h-1zM693 648h1v16h-1zM693 664h1v12h-1zM692 676h1v14h-1zM1061 664h1v12h-1zM197 584h1v22h-1zM858 584h1v22h-1zM653 584h1v22h-1zM386 568h1v16h-1zM1047 631h1v17h-1zM230 606h1v13h-1zM230 619h1v12h-1zM230 648h1v16h-1zM171 584h1v22h-1zM859 631h1v17h-1zM858 648h1v16h-1zM1068 631h1v17h-1zM349 664h1v12h-1zM860 584h1v22h-1zM695 584h1v22h-1zM947 631h1v17h-1zM947 648h1v16h-1zM947 664h1v12h-1zM948 584h1v22h-1zM949 606h1v13h-1zM758 648h1v16h-1zM759 648h1v16h-1zM449 648h1v16h-1zM448 664h1v12h-1zM449 676h1v14h-1zM348 619h1v12h-1zM743 664h1v12h-1zM487 631h1v17h-1zM846 619h1v12h-1zM845 648h1v16h-1zM995 584h1v22h-1zM743 664h1v12h-1zM742 676h1v14h-1zM331 648h1v16h-1zM331 664h1v12h-1zM126 584h1v22h-1zM128 648h1v16h-1zM128 664h1v12h-1zM156 619h1v12h-1zM1005 631h1v17h-1zM697 606h1v13h-1zM591 584h1v22h-1zM590 648h1v16h-1zM630 664h1v12h-1zM631 676h1v14h-1zM580 664h1v12h-1zM580 676h1v14h-1zM195 606h1v13h-1zM194 631h1v17h-1zM157 676h1v14h-1zM448 619h1v12h-1zM450 619h1v12h-1zM449 648h1v16h-1zM448 664h1v12h-1zM768 664h1v12h-1zM915 606h1v13h-1zM916 648h1v16h-1zM916 664h1v12h-1zM916 676h1v14h-1zM688 619h1v12h-1zM688 631h1v17h-1zM755 648h1v16h-1zM620 631h1v17h-1zM497 584h1v22h-1zM149 619h1v12h-1zM324 606h1v13h-1zM470 584h1v22h-1zM525 619h1v12h-1zM176 648h1v16h-1zM176 676h1v14h-1zM422 664h1v12h-1zM475 648h1v16h-1zM476 648h1v16h-1zM476 676h1v14h-1zM477 676h1v14h-1zM665 584h1v22h-1zM568 664h1v12h-1zM902 584h1v22h-1zM828 676h1v14h-1zM386 606h1v13h-1zM386 619h1v12h-1zM386 631h1v17h-1zM817 619h1v12h-1zM183 584h1v22h-1zM194 584h1v22h-1zM441 584h1v22h-1zM496 584h1v22h-1zM642 584h1v22h-1zM691 584h1v22h-1zM729 584h1v22h-1zM751 584h1v22h-1zM994 584h1v22h-1zM995 584h1v22h-1zM996 584h1v22h-1zM1064 584h1v22h-1zM281 606h1v13h-1zM314 606h1v13h-1zM342 606h1v13h-1zM489 606h1v13h-1zM712 606h1v13h-1zM751 606h1v13h-1zM869 606h1v13h-1zM1049 606h1v13h-1zM1072 606h1v13h-1zM212 631h1v17h-1zM383 631h1v17h-1zM555 631h1v17h-1zM678 631h1v17h-1zM706 631h1v17h-1zM818 631h1v17h-1zM893 631h1v17h-1zM986 631h1v17h-1zM201 648h1v16h-1zM202 648h1v16h-1zM215 648h1v16h-1zM320 648h1v16h-1zM498 648h1v16h-1zM502 648h1v16h-1zM694 648h1v16h-1zM750 648h1v16h-1zM925 648h1v16h-1zM126 664h1v12h-1zM172 664h1v12h-1zM186 664h1v12h-1zM250 664h1v12h-1zM269 664h1v12h-1zM303 664h1v12h-1zM305 664h1v12h-1zM316 664h1v12h-1zM318 664h1v12h-1zM328 664h1v12h-1zM351 664h1v12h-1zM387 664h1v12h-1zM388 664h1v12h-1zM391 664h1v12h-1zM457 664h1v12h-1zM458 664h1v12h-1zM494 664h1v12h-1zM509 664h1v12h-1zM515 664h1v12h-1zM551 664h1v12h-1zM552 664h1v12h-1zM601 664h1v12h-1zM602 664h1v12h-1zM710 664h1v12h-1zM723 664h1v12h-1zM802 664h1v12h-1zM873 664h1v12h-1zM933 664h1v12h-1zM963 664h1v12h-1zM967 664h1v12h-1zM1034 664h1v12h-1zM1071 664h1v12h-1zM99 676h1v14h-1zM104 676h1v14h-1zM111 676h1v14h-1zM112 676h1v14h-1zM119 676h1v14h-1zM121 676h1v14h-1zM130 676h1v14h-1zM133 676h1v14h-1zM141 676h1v14h-1zM144 676h1v14h-1zM147 676h1v14h-1zM148 676h1v14h-1zM152 676h1v14h-1zM155 676h1v14h-1zM182 676h1v14h-1zM185 676h1v14h-1zM193 676h1v14h-1zM220 676h1v14h-1zM224 676h1v14h-1zM236 676h1v14h-1zM252 676h1v14h-1zM262 676h1v14h-1zM264 676h1v14h-1zM274 676h1v14h-1zM288 676h1v14h-1zM301 676h1v14h-1zM312 676h1v14h-1zM314 676h1v14h-1zM318 676h1v14h-1zM319 676h1v14h-1zM327 676h1v14h-1zM339 676h1v14h-1zM347 676h1v14h-1zM357 676h1v14h-1zM363 676h1v14h-1zM365 676h1v14h-1zM377 676h1v14h-1zM383 676h1v14h-1zM398 676h1v14h-1zM409 676h1v14h-1zM410 676h1v14h-1zM418 676h1v14h-1zM430 676h1v14h-1zM451 676h1v14h-1zM456 676h1v14h-1zM464 676h1v14h-1zM477 676h1v14h-1zM495 676h1v14h-1zM520 676h1v14h-1zM522 676h1v14h-1zM526 676h1v14h-1zM545 676h1v14h-1zM546 676h1v14h-1zM577 676h1v14h-1zM586 676h1v14h-1zM593 676h1v14h-1zM594 676h1v14h-1zM616 676h1v14h-1zM627 676h1v14h-1zM636 676h1v14h-1zM655 676h1v14h-1zM659 676h1v14h-1zM661 676h1v14h-1zM668 676h1v14h-1zM690 676h1v14h-1zM695 676h1v14h-1zM722 676h1v14h-1zM736 676h1v14h-1zM742 676h1v14h-1zM768 676h1v14h-1zM772 676h1v14h-1zM788 676h1v14h-1zM789 676h1v14h-1zM808 676h1v14h-1zM810 676h1v14h-1zM815 676h1v14h-1zM826 676h1v14h-1zM836 676h1v14h-1zM840 676h1v14h-1zM862 676h1v14h-1zM868 676h1v14h-1zM874 676h1v14h-1zM876 676h1v14h-1zM883 676h1v14h-1zM890 676h1v14h-1zM903 676h1v14h-1zM920 676h1v14h-1zM925 676h1v14h-1zM946 676h1v14h-1zM953 676h1v14h-1zM959 676h1v14h-1zM977 676h1v14h-1zM984 676h1v14h-1zM986 676h1v14h-1zM989 676h1v14h-1zM992 676h1v14h-1zM1009 676h1v14h-1zM1019 676h1v14h-1zM1025 676h1v14h-1zM1036 676h1v14h-1zM1040 676h1v14h-1zM1041 676h1v14h-1zM1073 676h1v14h-1zM1079 676h1v14h-1z"/>
<path fill="url(#g4)" d="M146 514h1v8h-1zM250 514h1v8h-1zM346 514h1v8h-1zM364 514h1v8h-1zM609 514h1v8h-1zM649 514h1v8h-1zM912 514h1v8h-1zM950 514h1v8h-1zM956 514h1v8h-1zM1076 514h1v8h-1zM156 522h1v8h-1zM157 522h1v8h-1zM260 522h1v8h-1zM267 522h1v8h-1zM281 522h1v8h-1zM307 522h1v8h-1zM308 522h1v8h-1zM362 522h1v8h-1zM363 522h1v8h-1zM364 522h1v8h-1zM384 522h1v8h-1zM388 522h1v8h-1zM453 522h1v8h-1zM483 522h1v8h-1zM539 522h1v8h-1zM562 522h1v8h-1zM582 522h1v8h-1zM606 522h1v8h-1zM629 522h1v8h-1zM641 522h1v8h-1zM644 522h1v8h-1zM650 522h1v8h-1zM652 522h1v8h-1zM740 522h1v8h-1zM885 522h1v8h-1zM923 522h1v8h-1zM944 522h1v8h-1zM961 522h1v8h-1zM968 522h1v8h-1zM973 522h1v8h-1zM1027 522h1v8h-1zM1047 522h1v8h-1zM1056 522h1v8h-1zM118 526h1v25h-1zM131 526h1v25h-1zM138 526h1v25h-1zM146 526h1v25h-1zM147 526h1v25h-1zM179 526h1v25h-1zM182 526h1v25h-1zM184 526h1v25h-1zM192 526h1v25h-1zM198 526h1v25h-1zM199 526h1v25h-1zM207 526h1v25h-1zM208 526h1v25h-1zM209 526h1v25h-1zM212 526h1v25h-1zM227 526h1v25h-1zM237 526h1v25h-1zM240 526h1v25h-1zM244 526h1v25h-1zM248 526h1v25h-1zM258 526h1v25h-1zM260 526h1v25h-1zM266 526h1v25h-1zM268 526h1v25h-1zM271 526h1v25h-1zM273 526h1v25h-1zM274 526h1v25h-1zM288 526h1v25h-1zM301 526h1v25h-1zM305 526h1v25h-1zM312 526h1v25h-1zM326 526h1v25h-1zM327 526h1v25h-1zM335 526h1v25h-1zM337 526h1v25h-1zM364 526h1v25h-1zM421 526h1v25h-1zM423 526h1v25h-1zM429 526h1v25h-1zM432 526h1v25h-1zM436 526h1v25h-1zM466 526h1v25h-1zM467 526h1v25h-1zM468 526h1v25h-1zM486 526h1v25h-1zM488 526h1v25h-1zM492 526h1v25h-1zM494 526h1v25h-1zM495 526h1v25h-1zM503 526h1v25h-1zM505 526h1v25h-1zM512 526h1v25h-1zM517 526h1v25h-1zM559 526h1v25h-1zM579 526h1v25h-1zM602 526h1v25h-1zM604 526h1v25h-1zM606 526h1v25h-1zM614 526h1v25h-1zM643 526h1v25h-1zM650 526h1v25h-1zM653 526h1v25h-1zM662 526h1v25h-1zM668 526h1v25h-1zM711 526h1v25h-1zM712 526h1v25h-1zM738 526h1v25h-1zM748 526h1v25h-1zM756 526h1v25h-1zM769 526h1v25h-1zM771 526h1v25h-1zM773 526h1v25h-1zM774 526h1v25h-1zM776 526h1v25h-1zM783 526h1v25h-1zM784 526h1v25h-1zM816 526h1v25h-1zM818 526h1v25h-1zM822 526h1v25h-1zM830 526h1v25h-1zM843 526h1v25h-1zM884 526h1v25h-1zM894 526h1v25h-1zM904 526h1v25h-1zM913 526h1v25h-1zM915 526h1v25h-1zM916 526h1v25h-1zM923 526h1v25h-1zM924 526h1v25h-1zM933 526h1v25h-1zM942 526h1v25h-1zM943 526h1v25h-1zM955 526h1v25h-1zM980 526h1v25h-1zM984 526h1v25h-1zM998 526h1v25h-1zM1013 526h1v25h-1zM1018 526h1v25h-1zM1033 526h1v25h-1zM1039 526h1v25h-1zM1043 526h1v25h-1zM1057 526h1v25h-1zM1069 526h1v25h-1zM157 530h1v25h-1zM191 530h1v25h-1zM194 530h1v25h-1zM199 530h1v25h-1zM271 530h1v25h-1zM303 530h1v25h-1zM316 530h1v25h-1zM324 530h1v25h-1zM356 530h1v25h-1zM362 530h1v25h-1zM394 530h1v25h-1zM395 530h1v25h-1zM416 530h1v25h-1zM434 530h1v25h-1zM498 530h1v25h-1zM535 530h1v25h-1zM542 530h1v25h-1zM568 530h1v25h-1zM569 530h1v25h-1zM578 530h1v25h-1zM587 530h1v25h-1zM606 530h1v25h-1zM607 530h1v25h-1zM618 530h1v25h-1zM640 530h1v25h-1zM651 530h1v25h-1zM699 530h1v25h-1zM729 530h1v25h-1zM730 530h1v25h-1zM881 530h1v25h-1zM939 530h1v25h-1zM940 530h1v25h-1zM944 530h1v25h-1zM950 530h1v25h-1zM988 530h1v25h-1zM1074 530h1v25h-1zM1075 530h1v25h-1zM145 551h1v17h-1zM162 551h1v17h-1zM184 551h1v17h-1zM190 551h1v17h-1zM193 551h1v17h-1zM203 551h1v17h-1zM219 551h1v17h-1zM231 551h1v17h-1zM241 551h1v17h-1zM250 551h1v17h-1zM261 551h1v17h-1zM262 551h1v17h-1zM282 551h1v17h-1zM332 551h1v17h-1zM338 551h1v17h-1zM344 551h1v17h-1zM346 551h1v17h-1zM397 551h1v17h-1zM402 551h1v17h-1zM404 551h1v17h-1zM445 551h1v17h-1zM454 551h1v17h-1zM461 551h1v17h-1zM462 551h1v17h-1zM468 551h1v17h-1zM480 551h1v17h-1zM482 551h1v17h-1zM495 551h1v17h-1zM505 551h1v17h-1zM518 551h1v17h-1zM546 551h1v17h-1zM549 551h1v17h-1zM556 551h1v17h-1zM557 551h1v17h-1zM559 551h1v17h-1zM577 551h1v17h-1zM651 551h1v17h-1zM673 551h1v17h-1zM683 551h1v17h-1zM687 551h1v17h-1zM688 551h1v17h-1zM692 551h1v17h-1zM707 551h1v17h-1zM724 551h1v17h-1zM746 551h1v17h-1zM753 551h1v17h-1zM754 551h1v17h-1zM756 551h1v17h-1zM767 551h1v17h-1zM769 551h1v17h-1zM771 551h1v17h-1zM772 551h1v17h-1zM773 551h1v17h-1zM801 551h1v17h-1zM830 551h1v17h-1zM841 551h1v17h-1zM859 551h1v17h-1zM888 551h1v17h-1zM910 551h1v17h-1zM924 551h1v17h-1zM936 551h1v17h-1zM960 551h1v17h-1zM996 551h1v17h-1zM1000 551h1v17h-1zM1001 551h1v17h-1zM1012 551h1v17h-1zM1047 551h1v17h-1zM1052 551h1v17h-1zM1053 551h1v17h-1zM1067 551h1v17h-1zM101 555h1v25h-1zM152 555h1v25h-1zM158 555h1v25h-1zM182 555h1v25h-1zM198 555h1v25h-1zM323 555h1v25h-1zM361 555h1v25h-1zM534 555h1v25h-1zM537 555h1v25h-1zM553 555h1v25h-1zM572 555h1v25h-1zM576 555h1v25h-1zM582 555h1v25h-1zM602 555h1v25h-1zM657 555h1v25h-1zM658 555h1v25h-1zM682 555h1v25h-1zM760 555h1v25h-1zM782 555h1v25h-1zM810 555h1v25h-1zM844 555h1v25h-1zM916 555h1v25h-1zM951 555h1v25h-1zM973 555h1v25h-1zM1016 555h1v25h-1zM1017 555h1v25h-1zM1024 555h1v25h-1zM1044 555h1v25h-1zM96 568h1v16h-1zM152 568h1v16h-1zM176 568h1v16h-1zM190 568h1v16h-1zM191 568h1v16h-1zM193 568h1v16h-1zM194 568h1v16h-1zM202 568h1v16h-1zM233 568h1v16h-1zM238 568h1v16h-1zM271 568h1v16h-1zM292 568h1v16h-1zM359 568h1v16h-1zM360 568h1v16h-1zM368 568h1v16h-1zM372 568h1v16h-1zM385 568h1v16h-1zM387 568h1v16h-1zM389 568h1v16h-1zM402 568h1v16h-1zM425 568h1v16h-1zM435 568h1v16h-1zM487 568h1v16h-1zM495 568h1v16h-1zM509 568h1v16h-1zM578 568h1v16h-1zM579 568h1v16h-1zM583 568h1v16h-1zM584 568h1v16h-1zM602 568h1v16h-1zM611 568h1v16h-1zM612 568h1v16h-1zM619 568h1v16h-1zM622 568h1v16h-1zM669 568h1v16h-1zM766 568h1v16h-1zM772 568h1v16h-1zM803 568h1v16h-1zM911 568h1v16h-1zM913 568h1v16h-1zM919 568h1v16h-1zM991 568h1v16h-1zM1010 568h1v16h-1zM1038 568h1v16h-1zM1067 568h1v16h-1zM252 580h1v4h-1zM368 580h1v4h-1zM390 580h1v4h-1zM420 580h1v4h-1zM497 580h1v4h-1zM808 580h1v4h-1zM842 580h1v4h-1zM982 580h1v4h-1zM983 580h1v4h-1zM1025 580h1v4h-1zM1041 580h1v4h-1zM925 648h1v16h-1zM926 648h1v16h-1zM924 676h1v14h-1zM1010 619h1v12h-1zM1011 631h1v17h-1zM246 606h1v13h-1zM246 619h1v12h-1zM247 631h1v17h-1zM1069 584h1v22h-1zM1070 584h1v22h-1zM1069 606h1v13h-1zM1069 619h1v12h-1zM1070 619h1v12h-1zM1071 619h1v12h-1zM723 619h1v12h-1zM905 568h1v16h-1zM522 606h1v13h-1zM882 606h1v13h-1zM564 584h1v22h-1zM565 584h1v22h-1zM442 619h1v12h-1zM956 568h1v16h-1zM644 606h1v13h-1zM373 606h1v13h-1zM706 631h1v17h-1zM751 584h1v22h-1zM751 606h1v13h-1zM752 606h1v13h-1zM286 631h1v17h-1zM930 619h1v12h-1zM314 584h1v22h-1zM860 648h1v16h-1zM860 664h1v12h-1zM286 648h1v16h-1zM137 664h1v12h-1zM136 676h1v14h-1zM917 584h1v22h-1zM297 664h1v12h-1zM857 676h1v14h-1zM563 631h1v17h-1zM927 584h1v22h-1zM926 619h1v12h-1zM473 631h1v17h-1zM472 648h1v16h-1zM473 664h1v12h-1zM517 584h1v22h-1zM422 631h1v17h-1zM352 619h1v12h-1zM865 664h1v12h-1zM653 664h1v12h-1zM707 664h1v12h-1zM708 664h1v12h-1zM530 619h1v12h-1zM110 619h1v12h-1zM520 606h1v13h-1zM521 606h1v13h-1zM520 648h1v16h-1zM520 664h1v12h-1zM520 676h1v14h-1zM521 676h1v14h-1zM522 676h1v14h-1zM693 631h1v17h-1zM692 664h1v12h-1zM693 664h1v12h-1zM379 631h1v17h-1zM378 648h1v16h-1zM378 664h1v12h-1zM923 584h1v22h-1zM663 664h1v12h-1zM435 606h1v13h-1zM435 631h1v17h-1zM738 584h1v22h-1zM489 568h1v16h-1zM487 584h1v22h-1zM488 584h1v22h-1zM489 584h1v22h-1zM487 606h1v13h-1zM486 619h1v12h-1zM489 631h1v17h-1zM550 648h1v16h-1zM550 676h1v14h-1zM775 619h1v12h-1zM776 631h1v17h-1zM777 664h1v12h-1zM698 606h1v13h-1zM426 619h1v12h-1zM404 606h1v13h-1zM780 664h1v12h-1zM780 676h1v14h-1zM612 584h1v22h-1zM249 619h1v12h-1zM355 619h1v12h-1zM906 664h1v12h-1zM988 568h1v16h-1zM988 584h1v22h-1zM987 606h1v13h-1zM987 619h1v12h-1zM986 631h1v17h-1zM986 648h1v16h-1zM817 584h1v22h-1zM816 619h1v12h-1zM900 664h1v12h-1zM545 584h1v22h-1zM546 606h1v13h-1zM547 631h1v17h-1zM1044 606h1v13h-1zM936 664h1v12h-1zM738 584h1v22h-1zM739 584h1v22h-1zM737 606h1v13h-1zM738 619h1v12h-1zM737 648h1v16h-1zM738 648h1v16h-1zM739 648h1v16h-1zM500 606h1v13h-1zM353 648h1v16h-1zM216 568h1v16h-1zM604 568h1v16h-1zM605 568h1v16h-1zM787 606h1v13h-1zM788 606h1v13h-1zM787 619h1v12h-1zM1020 619h1v12h-1zM620 584h1v22h-1zM1015 631h1v17h-1zM893 606h1v13h-1zM157 619h1v12h-1zM157 648h1v16h-1zM157 676h1v14h-1zM734 584h1v22h-1zM734 606h1v13h-1zM497 631h1v17h-1zM498 664h1v12h-1zM499 676h1v14h-1zM1029 568h1v16h-1zM96 584h1v22h-1zM96 606h1v13h-1zM97 631h1v17h-1zM141 568h1v16h-1zM342 606h1v13h-1zM343 606h1v13h-1zM627 648h1v16h-1zM525 648h1v16h-1zM232 584h1v22h-1zM234 619h1v12h-1zM234 648h1v16h-1zM186 664h1v12h-1zM184 676h1v14h-1zM185 676h1v14h-1zM932 676h1v14h-1zM846 631h1v17h-1zM1013 606h1v13h-1zM618 648h1v16h-1zM697 606h1v13h-1zM372 648h1v16h-1zM371 619h1v12h-1zM240 606h1v13h-1zM296 568h1v16h-1zM297 584h1v22h-1zM297 631h1v17h-1zM296 676h1v14h-1zM767 568h1v16h-1zM472 664h1v12h-1zM571 606h1v13h-1zM911 584h1v22h-1zM555 619h1v12h-1zM321 664h1v12h-1zM322 664h1v12h-1zM321 676h1v14h-1zM323 676h1v14h-1zM1061 568h1v16h-1zM276 619h1v12h-1zM843 606h1v13h-1zM842 619h1v12h-1zM961 584h1v22h-1zM689 619h1v12h-1zM689 648h1v16h-1zM689 664h1v12h-1zM690 676h1v14h-1zM898 606h1v13h-1zM708 584h1v22h-1zM708 606h1v13h-1zM708 619h1v12h-1zM184 631h1v17h-1zM185 664h1v12h-1zM186 664h1v12h-1zM185 676h1v14h-1zM1022 676h1v14h-1zM697 606h1v13h-1zM698 631h1v17h-1zM365 648h1v16h-1zM365 676h1v14h-1zM990 664h1v12h-1zM331 664h1v12h-1zM332 664h1v12h-1zM592 606h1v13h-1zM590 631h1v17h-1zM1004 619h1v12h-1zM592 648h1v16h-1zM991 584h1v22h-1zM557 619h1v12h-1zM848 584h1v22h-1zM273 606h1v13h-1zM526 606h1v13h-1zM400 619h1v12h-1zM611 619h1v12h-1zM613 619h1v12h-1zM464 584h1v22h-1zM466 606h1v13h-1zM466 619h1v12h-1zM467 619h1v12h-1zM465 648h1v16h-1zM466 648h1v16h-1zM467 648h1v16h-1zM465 664h1v12h-1zM466 664h1v12h-1zM559 584h1v22h-1zM601 584h1v22h-1zM224 619h1v12h-1zM224 631h1v17h-1zM224 648h1v16h-1zM164 676h1v14h-1zM263 664h1v12h-1zM263 676h1v14h-1zM264 676h1v14h-1zM107 664h1v12h-1zM660 606h1v13h-1zM660 619h1v12h-1zM693 606h1v13h-1zM694 648h1v16h-1zM699 619h1v12h-1zM196 584h1v22h-1zM197 606h1v13h-1zM198 606h1v13h-1zM197 619h1v12h-1zM198 619h1v12h-1zM421 664h1v12h-1zM858 606h1v13h-1zM384 568h1v16h-1zM385 568h1v16h-1zM379 631h1v17h-1zM1044 606h1v13h-1zM441 619h1v12h-1zM441 648h1v16h-1zM695 584h1v22h-1zM231 606h1v13h-1zM231 619h1v12h-1zM231 664h1v12h-1zM870 584h1v22h-1zM297 648h1v16h-1zM1068 606h1v13h-1zM858 664h1v12h-1zM858 676h1v14h-1zM842 676h1v14h-1zM696 568h1v16h-1zM697 568h1v16h-1zM696 584h1v22h-1zM946 619h1v12h-1zM949 619h1v12h-1zM758 631h1v17h-1zM448 648h1v16h-1zM450 664h1v12h-1zM237 664h1v12h-1zM743 631h1v17h-1zM743 648h1v16h-1zM347 648h1v16h-1zM995 568h1v16h-1zM742 664h1v12h-1zM127 619h1v12h-1zM590 676h1v14h-1zM993 648h1v16h-1zM193 648h1v16h-1zM192 676h1v14h-1zM449 584h1v22h-1zM450 584h1v22h-1zM449 606h1v13h-1zM450 606h1v13h-1zM449 619h1v12h-1zM449 631h1v17h-1zM450 631h1v17h-1zM448 648h1v16h-1zM449 664h1v12h-1zM701 631h1v17h-1zM317 584h1v22h-1zM329 584h1v22h-1zM916 631h1v17h-1zM498 584h1v22h-1zM799 631h1v17h-1zM799 648h1v16h-1zM805 584h1v22h-1zM477 664h1v12h-1zM477 676h1v14h-1zM222 631h1v17h-1zM524 619h1v12h-1zM1077 664h1v12h-1zM176 664h1v12h-1zM476 664h1v12h-1zM568 676h1v14h-1zM902 606h1v13h-1zM1067 606h1v13h-1zM386 648h1v16h-1zM386 664h1v12h-1zM929 631h1v17h-1zM123 584h1v22h-1zM188 584h1v22h-1zM232 584h1v22h-1zM728 584h1v22h-1zM936 584h1v22h-1zM1048 584h1v22h-1zM219 606h1v13h-1zM220 606h1v13h-1zM328 606h1v13h-1zM490 606h1v13h-1zM703 606h1v13h-1zM713 606h1v13h-1zM868 606h1v13h-1zM870 606h1v13h-1zM871 606h1v13h-1zM873 606h1v13h-1zM899 606h1v13h-1zM900 606h1v13h-1zM901 606h1v13h-1zM951 606h1v13h-1zM384 631h1v17h-1zM412 631h1v17h-1zM414 631h1v17h-1zM471 631h1v17h-1zM614 631h1v17h-1zM672 631h1v17h-1zM673 631h1v17h-1zM674 631h1v17h-1zM819 631h1v17h-1zM820 631h1v17h-1zM987 631h1v17h-1zM123 648h1v16h-1zM124 648h1v16h-1zM198 648h1v16h-1zM199 648h1v16h-1zM276 648h1v16h-1zM521 648h1v16h-1zM697 648h1v16h-1zM709 648h1v16h-1zM712 648h1v16h-1zM814 648h1v16h-1zM825 648h1v16h-1zM907 648h1v16h-1zM987 648h1v16h-1zM1010 648h1v16h-1zM117 664h1v12h-1zM118 664h1v12h-1zM187 664h1v12h-1zM188 664h1v12h-1zM205 664h1v12h-1zM278 664h1v12h-1zM297 664h1v12h-1zM298 664h1v12h-1zM321 664h1v12h-1zM349 664h1v12h-1zM418 664h1v12h-1zM510 664h1v12h-1zM530 664h1v12h-1zM547 664h1v12h-1zM586 664h1v12h-1zM724 664h1v12h-1zM725 664h1v12h-1zM726 664h1v12h-1zM763 664h1v12h-1zM789 664h1v12h-1zM872 664h1v12h-1zM957 664h1v12h-1zM1064 664h1v12h-1zM1065 664h1v12h-1zM96 676h1v14h-1zM97 676h1v14h-1zM113 676h1v14h-1zM117 676h1v14h-1zM122 676h1v14h-1zM125 676h1v14h-1zM137 676h1v14h-1zM183 676h1v14h-1zM184 676h1v14h-1zM188 676h1v14h-1zM205 676h1v14h-1zM208 676h1v14h-1zM212 676h1v14h-1zM215 676h1v14h-1zM223 676h1v14h-1zM229 676h1v14h-1zM239 676h1v14h-1zM241 676h1v14h-1zM244 676h1v14h-1zM245 676h1v14h-1zM256 676h1v14h-1zM271 676h1v14h-1zM277 676h1v14h-1zM302 676h1v14h-1zM304 676h1v14h-1zM310 676h1v14h-1zM311 676h1v14h-1zM315 676h1v14h-1zM333 676h1v14h-1zM337 676h1v14h-1zM348 676h1v14h-1zM349 676h1v14h-1zM350 676h1v14h-1zM366 676h1v14h-1zM376 676h1v14h-1zM389 676h1v14h-1zM390 676h1v14h-1zM391 676h1v14h-1zM401 676h1v14h-1zM411 676h1v14h-1zM412 676h1v14h-1zM423 676h1v14h-1zM429 676h1v14h-1zM439 676h1v14h-1zM458 676h1v14h-1zM463 676h1v14h-1zM485 676h1v14h-1zM488 676h1v14h-1zM494 676h1v14h-1zM506 676h1v14h-1zM507 676h1v14h-1zM523 676h1v14h-1zM534 676h1v14h-1zM538 676h1v14h-1zM539 676h1v14h-1zM542 676h1v14h-1zM548 676h1v14h-1zM557 676h1v14h-1zM575 676h1v14h-1zM576 676h1v14h-1zM587 676h1v14h-1zM595 676h1v14h-1zM596 676h1v14h-1zM662 676h1v14h-1zM672 676h1v14h-1zM696 676h1v14h-1zM713 676h1v14h-1zM715 676h1v14h-1zM723 676h1v14h-1zM728 676h1v14h-1zM732 676h1v14h-1zM744 676h1v14h-1zM745 676h1v14h-1zM747 676h1v14h-1zM753 676h1v14h-1zM760 676h1v14h-1zM771 676h1v14h-1zM773 676h1v14h-1zM779 676h1v14h-1zM784 676h1v14h-1zM796 676h1v14h-1zM801 676h1v14h-1zM802 676h1v14h-1zM806 676h1v14h-1zM832 676h1v14h-1zM834 676h1v14h-1zM855 676h1v14h-1zM860 676h1v14h-1zM863 676h1v14h-1zM875 676h1v14h-1zM880 676h1v14h-1zM906 676h1v14h-1zM908 676h1v14h-1zM945 676h1v14h-1zM949 676h1v14h-1zM978 676h1v14h-1zM979 676h1v14h-1zM988 676h1v14h-1zM1000 676h1v14h-1zM1006 676h1v14h-1zM1007 676h1v14h-1zM1008 676h1v14h-1zM1026 676h1v14h-1zM1029 676h1v14h-1zM1030 676h1v14h-1zM1047 676h1v14h-1zM1052 676h1v14h-1zM1053 676h1v14h-1zM1057 676h1v14h-1zM1064 676h1v14h-1zM1067 676h1v14h-1zM1074 676h1v14h-1z"/>
<path fill="url(#g4)" d="M117 514h1v8h-1zM254 514h1v8h-1zM349 514h1v8h-1zM476 514h1v8h-1zM555 514h1v8h-1zM565 514h1v8h-1zM794 514h1v8h-1zM1001 514h1v8h-1zM1008 514h1v8h-1zM1075 514h1v8h-1zM110 522h1v8h-1zM123 522h1v8h-1zM179 522h1v8h-1zM329 522h1v8h-1zM332 522h1v8h-1zM376 522h1v8h-1zM387 522h1v8h-1zM410 522h1v8h-1zM411 522h1v8h-1zM448 522h1v8h-1zM538 522h1v8h-1zM573 522h1v8h-1zM576 522h1v8h-1zM577 522h1v8h-1zM615 522h1v8h-1zM616 522h1v8h-1zM642 522h1v8h-1zM649 522h1v8h-1zM693 522h1v8h-1zM810 522h1v8h-1zM927 522h1v8h-1zM945 522h1v8h-1zM1011 522h1v8h-1zM1028 522h1v8h-1zM1030 522h1v8h-1zM1052 522h1v8h-1zM97 526h1v25h-1zM113 526h1v25h-1zM124 526h1v25h-1zM130 526h1v25h-1zM139 526h1v25h-1zM142 526h1v25h-1zM143 526h1v25h-1zM149 526h1v25h-1zM162 526h1v25h-1zM167 526h1v25h-1zM177 526h1v25h-1zM178 526h1v25h-1zM197 526h1v25h-1zM221 526h1v25h-1zM223 526h1v25h-1zM226 526h1v25h-1zM231 526h1v25h-1zM239 526h1v25h-1zM241 526h1v25h-1zM243 526h1v25h-1zM255 526h1v25h-1zM256 526h1v25h-1zM267 526h1v25h-1zM272 526h1v25h-1zM283 526h1v25h-1zM290 526h1v25h-1zM297 526h1v25h-1zM303 526h1v25h-1zM307 526h1v25h-1zM321 526h1v25h-1zM345 526h1v25h-1zM380 526h1v25h-1zM404 526h1v25h-1zM416 526h1v25h-1zM417 526h1v25h-1zM425 526h1v25h-1zM433 526h1v25h-1zM447 526h1v25h-1zM455 526h1v25h-1zM482 526h1v25h-1zM500 526h1v25h-1zM510 526h1v25h-1zM515 526h1v25h-1zM535 526h1v25h-1zM548 526h1v25h-1zM551 526h1v25h-1zM558 526h1v25h-1zM564 526h1v25h-1zM567 526h1v25h-1zM589 526h1v25h-1zM596 526h1v25h-1zM605 526h1v25h-1zM608 526h1v25h-1zM610 526h1v25h-1zM626 526h1v25h-1zM651 526h1v25h-1zM686 526h1v25h-1zM688 526h1v25h-1zM693 526h1v25h-1zM695 526h1v25h-1zM705 526h1v25h-1zM706 526h1v25h-1zM709 526h1v25h-1zM710 526h1v25h-1zM737 526h1v25h-1zM768 526h1v25h-1zM775 526h1v25h-1zM779 526h1v25h-1zM780 526h1v25h-1zM785 526h1v25h-1zM787 526h1v25h-1zM823 526h1v25h-1zM833 526h1v25h-1zM845 526h1v25h-1zM861 526h1v25h-1zM866 526h1v25h-1zM868 526h1v25h-1zM869 526h1v25h-1zM883 526h1v25h-1zM910 526h1v25h-1zM930 526h1v25h-1zM938 526h1v25h-1zM939 526h1v25h-1zM961 526h1v25h-1zM967 526h1v25h-1zM968 526h1v25h-1zM990 526h1v25h-1zM1025 526h1v25h-1zM1076 526h1v25h-1zM1079 526h1v25h-1zM125 530h1v25h-1zM126 530h1v25h-1zM137 530h1v25h-1zM195 530h1v25h-1zM244 530h1v25h-1zM245 530h1v25h-1zM255 530h1v25h-1zM262 530h1v25h-1zM270 530h1v25h-1zM274 530h1v25h-1zM279 530h1v25h-1zM298 530h1v25h-1zM315 530h1v25h-1zM357 530h1v25h-1zM406 530h1v25h-1zM444 530h1v25h-1zM450 530h1v25h-1zM480 530h1v25h-1zM488 530h1v25h-1zM497 530h1v25h-1zM537 530h1v25h-1zM544 530h1v25h-1zM563 530h1v25h-1zM602 530h1v25h-1zM605 530h1v25h-1zM641 530h1v25h-1zM652 530h1v25h-1zM693 530h1v25h-1zM714 530h1v25h-1zM736 530h1v25h-1zM742 530h1v25h-1zM743 530h1v25h-1zM747 530h1v25h-1zM793 530h1v25h-1zM943 530h1v25h-1zM947 530h1v25h-1zM948 530h1v25h-1zM1029 530h1v25h-1zM1055 530h1v25h-1zM1059 530h1v25h-1zM1062 530h1v25h-1zM1064 530h1v25h-1zM1065 530h1v25h-1zM106 551h1v17h-1zM158 551h1v17h-1zM159 551h1v17h-1zM160 551h1v17h-1zM185 551h1v17h-1zM194 551h1v17h-1zM195 551h1v17h-1zM204 551h1v17h-1zM211 551h1v17h-1zM232 551h1v17h-1zM233 551h1v17h-1zM243 551h1v17h-1zM348 551h1v17h-1zM375 551h1v17h-1zM391 551h1v17h-1zM396 551h1v17h-1zM405 551h1v17h-1zM409 551h1v17h-1zM448 551h1v17h-1zM457 551h1v17h-1zM463 551h1v17h-1zM476 551h1v17h-1zM483 551h1v17h-1zM504 551h1v17h-1zM555 551h1v17h-1zM558 551h1v17h-1zM561 551h1v17h-1zM600 551h1v17h-1zM601 551h1v17h-1zM606 551h1v17h-1zM609 551h1v17h-1zM622 551h1v17h-1zM623 551h1v17h-1zM624 551h1v17h-1zM644 551h1v17h-1zM652 551h1v17h-1zM656 551h1v17h-1zM665 551h1v17h-1zM686 551h1v17h-1zM720 551h1v17h-1zM779 551h1v17h-1zM820 551h1v17h-1zM822 551h1v17h-1zM826 551h1v17h-1zM827 551h1v17h-1zM863 551h1v17h-1zM870 551h1v17h-1zM891 551h1v17h-1zM917 551h1v17h-1zM925 551h1v17h-1zM937 551h1v17h-1zM951 551h1v17h-1zM952 551h1v17h-1zM953 551h1v17h-1zM958 551h1v17h-1zM959 551h1v17h-1zM961 551h1v17h-1zM987 551h1v17h-1zM988 551h1v17h-1zM999 551h1v17h-1zM1004 551h1v17h-1zM1030 551h1v17h-1zM1040 551h1v17h-1zM1044 551h1v17h-1zM1045 551h1v17h-1zM246 555h1v25h-1zM255 555h1v25h-1zM264 555h1v25h-1zM346 555h1v25h-1zM357 555h1v25h-1zM406 555h1v25h-1zM456 555h1v25h-1zM668 555h1v25h-1zM677 555h1v25h-1zM681 555h1v25h-1zM758 555h1v25h-1zM839 555h1v25h-1zM855 555h1v25h-1zM856 555h1v25h-1zM974 555h1v25h-1zM982 555h1v25h-1zM1025 555h1v25h-1zM122 568h1v16h-1zM141 568h1v16h-1zM177 568h1v16h-1zM195 568h1v16h-1zM222 568h1v16h-1zM254 568h1v16h-1zM255 568h1v16h-1zM256 568h1v16h-1zM268 568h1v16h-1zM293 568h1v16h-1zM328 568h1v16h-1zM379 568h1v16h-1zM452 568h1v16h-1zM453 568h1v16h-1zM475 568h1v16h-1zM486 568h1v16h-1zM488 568h1v16h-1zM494 568h1v16h-1zM504 568h1v16h-1zM537 568h1v16h-1zM595 568h1v16h-1zM596 568h1v16h-1zM610 568h1v16h-1zM613 568h1v16h-1zM615 568h1v16h-1zM623 568h1v16h-1zM628 568h1v16h-1zM641 568h1v16h-1zM670 568h1v16h-1zM680 568h1v16h-1zM686 568h1v16h-1zM721 568h1v16h-1zM730 568h1v16h-1zM740 568h1v16h-1zM741 568h1v16h-1zM768 568h1v16h-1zM782 568h1v16h-1zM802 568h1v16h-1zM811 568h1v16h-1zM829 568h1v16h-1zM831 568h1v16h-1zM848 568h1v16h-1zM855 568h1v16h-1zM912 568h1v16h-1zM916 568h1v16h-1zM971 568h1v16h-1zM989 568h1v16h-1zM999 568h1v16h-1zM1000 568h1v16h-1zM1011 568h1v16h-1zM1018 568h1v16h-1zM1021 568h1v16h-1zM1039 568h1v16h-1zM221 580h1v4h-1zM230 580h1v4h-1zM329 580h1v4h-1zM677 580h1v4h-1zM843 580h1v4h-1zM892 580h1v4h-1zM950 580h1v4h-1zM981 580h1v4h-1zM1040 580h1v4h-1zM1053 580h1v4h-1zM924 648h1v16h-1zM924 664h1v12h-1zM604 664h1v12h-1zM137 619h1v12h-1zM1070 606h1v13h-1zM1056 568h1v16h-1zM1075 648h1v16h-1zM203 619h1v12h-1zM260 619h1v12h-1zM642 619h1v12h-1zM642 631h1v17h-1zM642 648h1v16h-1zM562 664h1v12h-1zM882 584h1v22h-1zM869 568h1v16h-1zM442 606h1v13h-1zM168 619h1v12h-1zM103 619h1v12h-1zM706 606h1v13h-1zM362 648h1v16h-1zM363 664h1v12h-1zM364 676h1v14h-1zM836 584h1v22h-1zM750 619h1v12h-1zM286 584h1v22h-1zM287 619h1v12h-1zM162 606h1v13h-1zM756 606h1v13h-1zM314 568h1v16h-1zM315 606h1v13h-1zM861 676h1v14h-1zM916 606h1v13h-1zM298 664h1v12h-1zM299 664h1v12h-1zM856 606h1v13h-1zM857 631h1v17h-1zM857 648h1v16h-1zM142 664h1v12h-1zM142 676h1v14h-1zM138 619h1v12h-1zM926 606h1v13h-1zM927 631h1v17h-1zM473 648h1v16h-1zM471 676h1v14h-1zM473 676h1v14h-1zM190 664h1v12h-1zM352 606h1v13h-1zM353 619h1v12h-1zM865 676h1v14h-1zM655 619h1v12h-1zM654 631h1v17h-1zM653 676h1v14h-1zM532 584h1v22h-1zM531 631h1v17h-1zM883 584h1v22h-1zM111 631h1v17h-1zM520 584h1v22h-1zM522 606h1v13h-1zM522 619h1v12h-1zM519 631h1v17h-1zM522 664h1v12h-1zM693 648h1v16h-1zM951 606h1v13h-1zM664 619h1v12h-1zM664 648h1v16h-1zM691 606h1v13h-1zM690 619h1v12h-1zM1032 584h1v22h-1zM893 606h1v13h-1zM487 568h1v16h-1zM488 568h1v16h-1zM488 606h1v13h-1zM487 619h1v12h-1zM487 631h1v17h-1zM488 631h1v17h-1zM549 606h1v13h-1zM776 648h1v16h-1zM777 676h1v14h-1zM431 584h1v22h-1zM432 606h1v13h-1zM432 619h1v12h-1zM432 631h1v17h-1zM432 664h1v12h-1zM699 584h1v22h-1zM655 664h1v12h-1zM655 676h1v14h-1zM656 676h1v14h-1zM403 619h1v12h-1zM403 631h1v17h-1zM402 664h1v12h-1zM613 568h1v16h-1zM613 606h1v13h-1zM612 619h1v12h-1zM357 619h1v12h-1zM583 619h1v12h-1zM583 631h1v17h-1zM907 664h1v12h-1zM905 676h1v14h-1zM907 676h1v14h-1zM409 631h1v17h-1zM1044 584h1v22h-1zM1045 584h1v22h-1zM1045 606h1v13h-1zM1044 619h1v12h-1zM739 606h1v13h-1zM737 619h1v12h-1zM737 631h1v17h-1zM499 606h1v13h-1zM606 568h1v16h-1zM605 584h1v22h-1zM606 584h1v22h-1zM1021 631h1v17h-1zM1020 648h1v16h-1zM619 606h1v13h-1zM621 606h1v13h-1zM1014 619h1v12h-1zM1015 619h1v12h-1zM1016 631h1v17h-1zM894 619h1v12h-1zM734 619h1v12h-1zM736 619h1v12h-1zM846 606h1v13h-1zM184 584h1v22h-1zM186 584h1v22h-1zM787 648h1v16h-1zM318 648h1v16h-1zM1030 584h1v22h-1zM627 664h1v12h-1zM299 606h1v13h-1zM1054 606h1v13h-1zM185 664h1v12h-1zM698 584h1v22h-1zM369 619h1v12h-1zM1056 584h1v22h-1zM890 676h1v14h-1zM1058 584h1v22h-1zM595 584h1v22h-1zM498 568h1v16h-1zM499 568h1v16h-1zM498 584h1v22h-1zM297 606h1v13h-1zM297 648h1v16h-1zM970 648h1v16h-1zM788 631h1v17h-1zM572 606h1v13h-1zM910 568h1v16h-1zM584 648h1v16h-1zM584 664h1v12h-1zM554 619h1v12h-1zM322 676h1v14h-1zM778 619h1v12h-1zM778 631h1v17h-1zM710 619h1v12h-1zM276 631h1v17h-1zM317 606h1v13h-1zM843 619h1v12h-1zM689 606h1v13h-1zM688 631h1v17h-1zM899 584h1v22h-1zM282 568h1v16h-1zM184 648h1v16h-1zM185 648h1v16h-1zM184 676h1v14h-1zM977 631h1v17h-1zM1022 648h1v16h-1zM365 664h1v12h-1zM330 648h1v16h-1zM331 648h1v16h-1zM332 676h1v14h-1zM1004 584h1v22h-1zM990 568h1v16h-1zM991 606h1v13h-1zM953 606h1v13h-1zM419 648h1v16h-1zM990 648h1v16h-1zM1039 648h1v16h-1zM1039 664h1v12h-1zM400 606h1v13h-1zM612 606h1v13h-1zM613 606h1v13h-1zM612 619h1v12h-1zM466 584h1v22h-1zM464 606h1v13h-1zM465 606h1v13h-1zM467 631h1v17h-1zM275 619h1v12h-1zM275 648h1v16h-1zM274 664h1v12h-1zM600 619h1v12h-1zM616 584h1v22h-1zM223 606h1v13h-1zM164 648h1v16h-1zM437 606h1v13h-1zM436 619h1v12h-1zM436 631h1v17h-1zM262 664h1v12h-1zM768 584h1v22h-1zM107 676h1v14h-1zM659 568h1v16h-1zM659 584h1v22h-1zM695 619h1v12h-1zM693 631h1v17h-1zM692 664h1v12h-1zM693 676h1v14h-1zM699 606h1v13h-1zM198 584h1v22h-1zM196 606h1v13h-1zM199 619h1v12h-1zM421 648h1v16h-1zM857 619h1v12h-1zM379 648h1v16h-1zM913 648h1v16h-1zM668 631h1v17h-1zM1042 606h1v13h-1zM1043 606h1v13h-1zM441 631h1v17h-1zM230 631h1v17h-1zM231 631h1v17h-1zM231 648h1v16h-1zM230 664h1v12h-1zM231 676h1v14h-1zM232 676h1v14h-1zM870 606h1v13h-1zM298 631h1v17h-1zM298 664h1v12h-1zM159 631h1v17h-1zM171 568h1v16h-1zM858 619h1v12h-1zM1068 648h1v16h-1zM841 648h1v16h-1zM842 664h1v12h-1zM695 568h1v16h-1zM697 584h1v22h-1zM946 606h1v13h-1zM947 676h1v14h-1zM759 631h1v17h-1zM450 648h1v16h-1zM449 664h1v12h-1zM450 676h1v14h-1zM451 676h1v14h-1zM821 619h1v12h-1zM348 606h1v13h-1zM845 631h1v17h-1zM743 676h1v14h-1zM214 648h1v16h-1zM127 606h1v13h-1zM128 631h1v17h-1zM995 631h1v17h-1zM857 619h1v12h-1zM857 631h1v17h-1zM858 648h1v16h-1zM284 631h1v17h-1zM284 648h1v16h-1zM591 568h1v16h-1zM591 606h1v13h-1zM590 619h1v12h-1zM590 631h1v17h-1zM590 664h1v12h-1zM631 664h1v12h-1zM632 664h1v12h-1zM632 676h1v14h-1zM633 676h1v14h-1zM453 648h1v16h-1zM195 619h1v12h-1zM193 664h1v12h-1zM157 664h1v12h-1zM451 584h1v22h-1zM448 606h1v13h-1zM451 631h1v17h-1zM450 648h1v16h-1zM450 664h1v12h-1zM916 619h1v12h-1zM689 648h1v16h-1zM988 648h1v16h-1zM431 631h1v17h-1zM512 631h1v17h-1zM755 664h1v12h-1zM799 664h1v12h-1zM799 676h1v14h-1zM212 568h1v16h-1zM805 606h1v13h-1zM805 619h1v12h-1zM805 631h1v17h-1zM804 648h1v16h-1zM223 648h1v16h-1zM524 606h1v13h-1zM525 606h1v13h-1zM526 606h1v13h-1zM526 619h1v12h-1zM1076 648h1v16h-1zM1077 676h1v14h-1zM905 568h1v16h-1zM176 631h1v17h-1zM725 584h1v22h-1zM422 648h1v16h-1zM668 584h1v22h-1zM477 664h1v12h-1zM1019 568h1v16h-1zM666 606h1v13h-1zM568 648h1v16h-1zM828 664h1v12h-1zM386 676h1v14h-1zM195 584h1v22h-1zM442 584h1v22h-1zM443 584h1v22h-1zM444 584h1v22h-1zM497 584h1v22h-1zM663 584h1v22h-1zM692 584h1v22h-1zM711 584h1v22h-1zM852 584h1v22h-1zM853 584h1v22h-1zM872 584h1v22h-1zM974 584h1v22h-1zM990 584h1v22h-1zM110 606h1v13h-1zM343 606h1v13h-1zM393 606h1v13h-1zM660 606h1v13h-1zM711 606h1v13h-1zM725 606h1v13h-1zM799 606h1v13h-1zM861 606h1v13h-1zM876 606h1v13h-1zM1073 606h1v13h-1zM413 631h1v17h-1zM675 631h1v17h-1zM817 631h1v17h-1zM329 648h1v16h-1zM503 648h1v16h-1zM522 648h1v16h-1zM563 648h1v16h-1zM751 648h1v16h-1zM906 648h1v16h-1zM154 664h1v12h-1zM162 664h1v12h-1zM165 664h1v12h-1zM185 664h1v12h-1zM206 664h1v12h-1zM207 664h1v12h-1zM246 664h1v12h-1zM247 664h1v12h-1zM306 664h1v12h-1zM315 664h1v12h-1zM319 664h1v12h-1zM320 664h1v12h-1zM350 664h1v12h-1zM396 664h1v12h-1zM437 664h1v12h-1zM438 664h1v12h-1zM517 664h1v12h-1zM537 664h1v12h-1zM625 664h1v12h-1zM687 664h1v12h-1zM732 664h1v12h-1zM739 664h1v12h-1zM740 664h1v12h-1zM764 664h1v12h-1zM765 664h1v12h-1zM769 664h1v12h-1zM890 664h1v12h-1zM902 664h1v12h-1zM953 664h1v12h-1zM975 664h1v12h-1zM1033 664h1v12h-1zM1063 664h1v12h-1zM105 676h1v14h-1zM106 676h1v14h-1zM107 676h1v14h-1zM116 676h1v14h-1zM134 676h1v14h-1zM138 676h1v14h-1zM153 676h1v14h-1zM154 676h1v14h-1zM166 676h1v14h-1zM167 676h1v14h-1zM170 676h1v14h-1zM178 676h1v14h-1zM191 676h1v14h-1zM192 676h1v14h-1zM196 676h1v14h-1zM204 676h1v14h-1zM209 676h1v14h-1zM219 676h1v14h-1zM222 676h1v14h-1zM246 676h1v14h-1zM270 676h1v14h-1zM273 676h1v14h-1zM296 676h1v14h-1zM299 676h1v14h-1zM305 676h1v14h-1zM313 676h1v14h-1zM317 676h1v14h-1zM324 676h1v14h-1zM334 676h1v14h-1zM344 676h1v14h-1zM352 676h1v14h-1zM353 676h1v14h-1zM358 676h1v14h-1zM361 676h1v14h-1zM367 676h1v14h-1zM370 676h1v14h-1zM375 676h1v14h-1zM400 676h1v14h-1zM444 676h1v14h-1zM467 676h1v14h-1zM468 676h1v14h-1zM469 676h1v14h-1zM471 676h1v14h-1zM476 676h1v14h-1zM478 676h1v14h-1zM491 676h1v14h-1zM501 676h1v14h-1zM509 676h1v14h-1zM525 676h1v14h-1zM537 676h1v14h-1zM540 676h1v14h-1zM541 676h1v14h-1zM547 676h1v14h-1zM556 676h1v14h-1zM558 676h1v14h-1zM626 676h1v14h-1zM637 676h1v14h-1zM640 676h1v14h-1zM644 676h1v14h-1zM671 676h1v14h-1zM698 676h1v14h-1zM700 676h1v14h-1zM704 676h1v14h-1zM705 676h1v14h-1zM714 676h1v14h-1zM718 676h1v14h-1zM726 676h1v14h-1zM727 676h1v14h-1zM729 676h1v14h-1zM730 676h1v14h-1zM749 676h1v14h-1zM755 676h1v14h-1zM766 676h1v14h-1zM767 676h1v14h-1zM769 676h1v14h-1zM770 676h1v14h-1zM785 676h1v14h-1zM797 676h1v14h-1zM803 676h1v14h-1zM805 676h1v14h-1zM811 676h1v14h-1zM812 676h1v14h-1zM813 676h1v14h-1zM835 676h1v14h-1zM841 676h1v14h-1zM842 676h1v14h-1zM845 676h1v14h-1zM847 676h1v14h-1zM857 676h1v14h-1zM859 676h1v14h-1zM861 676h1v14h-1zM870 676h1v14h-1zM871 676h1v14h-1zM873 676h1v14h-1zM881 676h1v14h-1zM904 676h1v14h-1zM905 676h1v14h-1zM929 676h1v14h-1zM930 676h1v14h-1zM948 676h1v14h-1zM954 676h1v14h-1zM955 676h1v14h-1zM956 676h1v14h-1zM957 676h1v14h-1zM976 676h1v14h-1zM981 676h1v14h-1zM987 676h1v14h-1zM990 676h1v14h-1zM991 676h1v14h-1zM998 676h1v14h-1zM999 676h1v14h-1zM1037 676h1v14h-1zM1039 676h1v14h-1zM1065 676h1v14h-1zM1066 676h1v14h-1zM1068 676h1v14h-1zM1072 676h1v14h-1z"/>
<text x="29.30" y="707.00" font-size="12.4" textLength="50.14" lengthAdjust="spacingAndGlyphs" fill="#404040" xml:space="preserve" >Sunlight?</text>
<rect x="95.5" y="695.5" width="985" height="15" fill="#00ff00" stroke="#333" stroke-width="1"/>
<line x1="96" y1="695.5" x2="96" y2="710.5" stroke="#000" stroke-width="2" />
<path stroke="#333" stroke-width="1" fill="none" d="M136.5 710.5v4M177.5 710.5v4M218.5 710.5v8M259.5 710.5v4M300.5 710.5v4M341.5 710.5v8M382.5 710.5v4M423.5 710.5v4M464.5 710.5v8M505.5 710.5v4M546.5 710.5v4M587.5 710.5v8M628.5 710.5v4M669.5 710.5v4M710.5 710.5v8M751.5 710.5v4M792.5 710.5v4M833.5 710.5v8M874.5 710.5v4M915.5 710.5v4M956.5 710.5v8M997.5 710.5v4M1038.5 710.5v4M1080.5 710.5v8"/>
<text x="200.73" y="734.00" font-size="12.4" textLength="35.26" lengthAdjust="spacing" fill="#404040" xml:space="preserve" >03:00</text>
<text x="323.73" y="734.00" font-size="12.4" textLength="35.26" lengthAdjust="spacing" fill="#404040" xml:space="preserve" >06:00</text>
<text x="446.73" y="734.00" font-size="12.4" textLength="35.26" lengthAdjust="spacing" fill="#404040" xml:space="preserve" >09:00</text>
<text x="569.58" y="734.00" font-size="12.4" textLength="35.15" lengthAdjust="spacing" fill="#404040" xml:space="preserve" >12:00</text>
<text x="692.58" y="734.00" font-size="12.4" textLength="35.15" lengthAdjust="spacing" fill="#404040" xml:space="preserve" >15:00</text>
<text x="815.58" y="734.00" font-size="12.4" textLength="35.15" lengthAdjust="spacing" fill="#404040" xml:space="preserve" >18:00</text>
<text x="938.68" y="734.00" font-size="12.4" textLength="35.26" lengthAdjust="spacing" fill="#404040" xml:space="preserve" >21:00</text>
<text x="1062.83" y="734.00" font-size="12.4" textLength="35.26" lengthAdjust="spacing" fill="#404040" xml:space="preserve" >00:00</text>
<text x="200.73" y="749.00" font-size="12.4" textLength="35.15" lengthAdjust="spacing" fill="#404040" xml:space="preserve" >23.93</text>
<text x="200.74" y="764.00" font-size="12.4" textLength="35.15" lengthAdjust="spacing" fill="#404040" xml:space="preserve" >63.45</text>
<text x="200.63" y="779.00" font-size="12.4" textLength="35.36" lengthAdjust="spacing" fill="#404040" xml:space="preserve" >69.48</text>
<text x="323.58" y="749.00" font-size="12.4" textLength="35.36" lengthAdjust="spacing" fill="#404040" xml:space="preserve" >23.94</text>
<text x="323.79" y="764.00" font-size="12.4" textLength="35.15" lengthAdjust="spacing" fill="#404040" xml:space="preserve" >63.51</text>
<text x="323.63" y="779.00" font-size="12.4" textLength="35.36" lengthAdjust="spacing" fill="#404040" xml:space="preserve" >69.80</text>
<text x="446.79" y="749.00" font-size="12.4" textLength="35.05" lengthAdjust="spacing" fill="#404040" xml:space="preserve" >23.95</text>
<text x="446.73" y="764.00" font-size="12.4" textLength="35.26" lengthAdjust="spacing" fill="#404040" xml:space="preserve" >63.57</text>
<text x="446.94" y="779.00" font-size="12.4" textLength="34.84" lengthAdjust="spacing" fill="#404040" xml:space="preserve" >70.12</text>
<text x="569.63" y="749.00" font-size="12.4" textLength="35.36" lengthAdjust="spacing" fill="#404040" xml:space="preserve" >23.96</text>
<text x="569.68" y="764.00" font-size="12.4" textLength="35.26" lengthAdjust="spacing" fill="#404040" xml:space="preserve" >63.63</text>
<text x="569.63" y="779.00" font-size="12.4" textLength="35.26" lengthAdjust="spacing" fill="#404040" xml:space="preserve" >70.44</text>
<text x="692.79" y="749.00" font-size="12.4" textLength="35.15" lengthAdjust="spacing" fill="#404040" xml:space="preserve" >23.97</text>
<text x="692.63" y="764.00" font-size="12.4" textLength="35.47" lengthAdjust="spacing" fill="#404040" xml:space="preserve" >63.69</text>
<text x="692.84" y="779.00" font-size="12.4" textLength="35.05" lengthAdjust="spacing" fill="#404040" xml:space="preserve" >70.77</text>
<text x="815.68" y="749.00" font-size="12.4" textLength="35.26" lengthAdjust="spacing" fill="#404040" xml:space="preserve" >23.98</text>
<text x="815.52" y="764.00" font-size="12.4" textLength="35.47" lengthAdjust="spacing" fill="#404040" xml:space="preserve" >63.74</text>
<text x="815.73" y="779.00" font-size="12.4" textLength="35.26" lengthAdjust="spacing" fill="#404040" xml:space="preserve" >71.09</text>
<text x="938.68" y="749.00" font-size="12.4" textLength="35.36" lengthAdjust="spacing" fill="#404040" xml:space="preserve" >23.99</text>
<text x="938.63" y="764.00" font-size="12.4" textLength="35.47" lengthAdjust="spacing" fill="#404040" xml:space="preserve" >63.79</text>
<text x="938.94" y="779.00" font-size="12.4" textLength="34.84" lengthAdjust="spacing" fill="#404040" xml:space="preserve" >71.42</text>
<text x="1070.38" y="749.00" font-size="12.4" textLength="27.29" lengthAdjust="spacing" fill="#404040" xml:space="preserve" >0.00</text>
<text x="1062.62" y="764.00" font-size="12.4" textLength="35.47" lengthAdjust="spacing" fill="#404040" xml:space="preserve" >63.84</text>
<text x="1062.78" y="779.00" font-size="12.4" textLength="35.26" lengthAdjust="spacing" fill="#404040" xml:space="preserve" >71.76</text>
<text x="1062.08" y="746.00" font-size="12.4" textLength="62.73" lengthAdjust="spacing" fill="#404040" xml:space="preserve" >2013–309</text>
<text x="15.67" y="749.00" font-size="12.4" textLength="44.35" lengthAdjust="spacing" fill="#404040" xml:space="preserve" >LT (hrs)</text>
<text x="45.97" y="764.00" font-size="12.4" textLength="13.67" lengthAdjust="spacingAndGlyphs" fill="#404040" xml:space="preserve" >Rs</text>
<text x="12.87" y="779.00" font-size="12.4" textLength="47.47" lengthAdjust="spacing" fill="#404040" xml:space="preserve" >Dipole L</text>
<rect x="215.6" y="802.6" width="150.80" height="147.70" fill="none" stroke="#222" stroke-width="1.2"/>
<clipPath id="clip0"><rect x="215.6" y="802.6" width="150.80" height="147.70"/></clipPath>
<polyline clip-path="url(#clip0)" fill="none" stroke="#1428ff" stroke-width="1.3" stroke-dasharray="2.6,1.3" points="313.4,792.2 311.7,793.3 310.1,794.3 308.4,795.4 306.8,796.4 305.3,797.5 303.7,798.5 302.2,799.6 300.8,800.6 299.3,801.7 297.9,802.8 296.5,803.8 295.1,804.9 293.8,805.9 292.5,807.0 291.2,808.0 289.9,809.1 288.7,810.1 287.5,811.2 286.3,812.2 285.1,813.3 284.0,814.4 282.9,815.4 281.8,816.5 280.7,817.5 279.7,818.6 278.7,819.6 277.7,820.7 276.7,821.7 275.8,822.8 274.9,823.9 274.0,824.9 273.1,826.0 272.2,827.0 271.4,828.1 270.6,829.1 269.8,830.2 269.0,831.2 268.3,832.3 267.5,833.3 266.8,834.4 266.1,835.5 265.5,836.5 264.8,837.6 264.2,838.6 263.6,839.7 263.0,840.7 262.4,841.8 261.8,842.8 261.3,843.9 260.8,845.0 260.3,846.0 259.8,847.1 259.3,848.1 258.9,849.2 258.5,850.2 258.0,851.3 257.6,852.3 257.3,853.4 256.9,854.4 256.6,855.5 256.3,856.6 255.9,857.6 255.7,858.7 255.4,859.7 255.1,860.8 254.9,861.8 254.7,862.9 254.5,863.9 254.3,865.0 254.1,866.1 253.9,867.1 253.8,868.2 253.7,869.2 253.6,870.3 253.5,871.3 253.4,872.4 253.4,873.4 253.3,874.5 253.3,875.5 253.3,876.6 253.3,877.7 253.3,878.7 253.4,879.8 253.4,880.8 253.5,881.9 253.6,882.9 253.7,884.0 253.8,885.0 253.9,886.1 254.1,887.1 254.3,888.2 254.5,889.3 254.7,890.3 254.9,891.4 255.1,892.4 255.4,893.5 255.7,894.5 255.9,895.6 256.3,896.6 256.6,897.7 256.9,898.8 257.3,899.8 257.6,900.9 258.0,901.9 258.5,903.0 258.9,904.0 259.3,905.1 259.8,906.1 260.3,907.2 260.8,908.2 261.3,909.3 261.8,910.4 262.4,911.4 263.0,912.5 263.6,913.5 264.2,914.6 264.8,915.6 265.5,916.7 266.1,917.7 266.8,918.8 267.5,919.9 268.3,920.9 269.0,922.0 269.8,923.0 270.6,924.1 271.4,925.1 272.2,926.2 273.1,927.2 274.0,928.3 274.9,929.4 275.8,930.4 276.7,931.5 277.7,932.5 278.7,933.6 279.7,934.6 280.7,935.7 281.8,936.7 282.9,937.8 284.0,938.8 285.1,939.9 286.3,941.0 287.5,942.0 288.7,943.1 289.9,944.1 291.2,945.2 292.5,946.2 293.8,947.3 295.1,948.3 296.5,949.4 297.9,950.5 299.3,951.5 300.8,952.6 302.2,953.6 303.7,954.7 305.3,955.7 306.8,956.8 308.4,957.8 310.1,958.9 311.7,959.9 313.4,961.0"/>
<polyline clip-path="url(#clip0)" fill="none" stroke="#7d4f24" stroke-width="1.3" stroke-dasharray="2.6,1.3" points="392.5,792.2 388.0,793.3 383.7,794.3 379.5,795.4 375.4,796.4 371.4,797.5 367.5,798.5 363.8,799.6 360.1,800.6 356.6,801.7 353.1,802.8 349.7,803.8 346.5,804.9 343.3,805.9 340.2,807.0 337.2,808.0 334.3,809.1 331.5,810.1 328.7,811.2 326.1,812.2 323.5,813.3 321.0,814.4 318.6,815.4 316.2,816.5 313.9,817.5 311.7,818.6 309.6,819.6 307.5,820.7 305.5,821.7 303.6,822.8 301.7,823.9 299.9,824.9 298.1,826.0 296.4,827.0 294.8,828.1 293.2,829.1 291.7,830.2 290.2,831.2 288.8,832.3 287.4,833.3 286.1,834.4 284.8,835.5 283.6,836.5 282.4,837.6 281.3,838.6 280.2,839.7 279.1,840.7 278.1,841.8 277.2,842.8 276.2,843.9 275.4,845.0 274.5,846.0 273.7,847.1 272.9,848.1 272.2,849.2 271.5,850.2 270.8,851.3 270.2,852.3 269.6,853.4 269.0,854.4 268.4,855.5 267.9,856.6 267.4,857.6 267.0,858.7 266.6,859.7 266.2,860.8 265.8,861.8 265.4,862.9 265.1,863.9 264.8,865.0 264.6,866.1 264.3,867.1 264.1,868.2 263.9,869.2 263.8,870.3 263.6,871.3 263.5,872.4 263.4,873.4 263.4,874.5 263.3,875.5 263.3,876.6 263.3,877.7 263.4,878.7 263.4,879.8 263.5,880.8 263.6,881.9 263.8,882.9 263.9,884.0 264.1,885.0 264.3,886.1 264.6,887.1 264.8,888.2 265.1,889.3 265.4,890.3 265.8,891.4 266.2,892.4 266.6,893.5 267.0,894.5 267.4,895.6 267.9,896.6 268.4,897.7 269.0,898.8 269.6,899.8 270.2,900.9 270.8,901.9 271.5,903.0 272.2,904.0 272.9,905.1 273.7,906.1 274.5,907.2 275.4,908.2 276.2,909.3 277.2,910.4 278.1,911.4 279.1,912.5 280.2,913.5 281.3,914.6 282.4,915.6 283.6,916.7 284.8,917.7 286.1,918.8 287.4,919.9 288.8,920.9 290.2,922.0 291.7,923.0 293.2,924.1 294.8,925.1 296.4,926.2 298.1,927.2 299.9,928.3 301.7,929.4 303.6,930.4 305.5,931.5 307.5,932.5 309.6,933.6 311.7,934.6 313.9,935.7 316.2,936.7 318.6,937.8 321.0,938.8 323.5,939.9 326.1,941.0 328.7,942.0 331.5,943.1 334.3,944.1 337.2,945.2 340.2,946.2 343.3,947.3 346.5,948.3 349.7,949.4 353.1,950.5 356.6,951.5 360.1,952.6 363.8,953.6 367.5,954.7 371.4,955.7 375.4,956.8 379.5,957.8 383.7,958.9 388.0,959.9 392.5,961.0"/>
<path stroke="#333" stroke-width="1" fill="none" d="M211.6 802.5h4M207.6 813.5h8M211.6 823.5h4M207.6 834.5h8M211.6 844.5h4M207.6 855.5h8M211.6 866.5h4M207.6 876.5h8M211.6 887.5h4M207.6 897.5h8M211.6 908.5h4M207.6 918.5h8M211.6 929.5h4M207.6 939.5h8M211.6 950.5h4M366.5 950.3v4M355.5 950.3v4M344.5 950.3v8M334.5 950.3v4M323.5 950.3v4M312.5 950.3v4M302.5 950.3v4M291.5 950.3v8M280.5 950.3v4M270.5 950.3v4M259.5 950.3v4M248.5 950.3v4M237.5 950.3v8M227.5 950.3v4M216.5 950.3v4"/>
<rect x="177.17" y="813.40" width="5.1" height="1.1" fill="#404040"/>
<text x="182.79" y="817.60" font-size="12.4" textLength="19.63" lengthAdjust="spacing" fill="#404040" xml:space="preserve" >60.</text>
<rect x="177.17" y="834.50" width="5.1" height="1.1" fill="#404040"/>
<text x="182.89" y="838.70" font-size="12.4" textLength="19.53" lengthAdjust="spacing" fill="#404040" xml:space="preserve" >40.</text>
<rect x="177.17" y="855.60" width="5.1" height="1.1" fill="#404040"/>
<text x="182.90" y="859.80" font-size="12.4" textLength="19.52" lengthAdjust="spacing" fill="#404040" xml:space="preserve" >20.</text>
<text x="190.90" y="880.90" font-size="12.4" textLength="11.45" lengthAdjust="spacing" fill="#404040" xml:space="preserve" >0.</text>
<text x="182.90" y="902.00" font-size="12.4" textLength="19.52" lengthAdjust="spacing" fill="#404040" xml:space="preserve" >20.</text>
<text x="182.89" y="923.10" font-size="12.4" textLength="19.53" lengthAdjust="spacing" fill="#404040" xml:space="preserve" >40.</text>
<text x="182.79" y="944.20" font-size="12.4" textLength="19.63" lengthAdjust="spacing" fill="#404040" xml:space="preserve" >60.</text>
<text x="227.44" y="973.70" font-size="12.4" textLength="19.42" lengthAdjust="spacing" fill="#404040" xml:space="preserve" >50.</text>
<text x="284.89" y="973.70" font-size="12.4" textLength="11.45" lengthAdjust="spacing" fill="#404040" xml:space="preserve" >0.</text>
<rect x="331.77" y="969.50" width="5.1" height="1.1" fill="#404040"/>
<text x="337.60" y="973.70" font-size="12.4" textLength="19.42" lengthAdjust="spacing" fill="#404040" xml:space="preserve" >50.</text>
<text x="270.49" y="992.00" font-size="12.4" textLength="39.14" lengthAdjust="spacingAndGlyphs" fill="#404040" xml:space="preserve" >KSM–X</text>
<g transform="translate(167.20,876.60) rotate(-90)">
<text x="-19.54" y="0.00" font-size="12.4" textLength="38.41" lengthAdjust="spacingAndGlyphs" fill="#404040" xml:space="preserve" >KSM–Y</text>
</g>
<circle cx="291.4" cy="877.2" r="20.3" fill="none" stroke="#000" stroke-width="1.35"/>
<circle cx="291.40" cy="876.60" r="1.5" fill="none" stroke="#000" stroke-width="0.8"/>
<rect x="300.8" y="892.4" width="5" height="5" fill="#ff0000" />
<polyline fill="none" stroke="#000" stroke-width="1.4" points="350.8,862.1 354.0,865.5 355.8,870.4 355.8,875.0 355.3,880.5"/>
<rect x="353.8" y="869" width="5" height="6" fill="#0000dd" />
<path d="M351.5 867 L360.5 876 M360.5 867 L351.5 876" stroke="#ff3030" stroke-width="1.3"/>
<rect x="509.6" y="802.6" width="150.80" height="147.70" fill="none" stroke="#222" stroke-width="1.2"/>
<clipPath id="clip1"><rect x="509.6" y="802.6" width="150.80" height="147.70"/></clipPath>
<polyline clip-path="url(#clip1)" fill="none" stroke="#1428ff" stroke-width="1.3" stroke-dasharray="2.6,1.3" points="607.4,792.2 605.7,793.3 604.1,794.3 602.4,795.4 600.8,796.4 599.3,797.5 597.7,798.5 596.2,799.6 594.8,800.6 593.3,801.7 591.9,802.8 590.5,803.8 589.1,804.9 587.8,805.9 586.5,807.0 585.2,808.0 583.9,809.1 582.7,810.1 581.5,811.2 580.3,812.2 579.1,813.3 578.0,814.4 576.9,815.4 575.8,816.5 574.7,817.5 573.7,818.6 572.7,819.6 571.7,820.7 570.7,821.7 569.8,822.8 568.9,823.9 568.0,824.9 567.1,826.0 566.2,827.0 565.4,828.1 564.6,829.1 563.8,830.2 563.0,831.2 562.3,832.3 561.5,833.3 560.8,834.4 560.1,835.5 559.5,836.5 558.8,837.6 558.2,838.6 557.6,839.7 557.0,840.7 556.4,841.8 555.8,842.8 555.3,843.9 554.8,845.0 554.3,846.0 553.8,847.1 553.3,848.1 552.9,849.2 552.5,850.2 552.0,851.3 551.6,852.3 551.3,853.4 550.9,854.4 550.6,855.5 550.3,856.6 549.9,857.6 549.7,858.7 549.4,859.7 549.1,860.8 548.9,861.8 548.7,862.9 548.5,863.9 548.3,865.0 548.1,866.1 547.9,867.1 547.8,868.2 547.7,869.2 547.6,870.3 547.5,871.3 547.4,872.4 547.4,873.4 547.3,874.5 547.3,875.5 547.3,876.6 547.3,877.7 547.3,878.7 547.4,879.8 547.4,880.8 547.5,881.9 547.6,882.9 547.7,884.0 547.8,885.0 547.9,886.1 548.1,887.1 548.3,888.2 548.5,889.3 548.7,890.3 548.9,891.4 549.1,892.4 549.4,893.5 549.7,894.5 549.9,895.6 550.3,896.6 550.6,897.7 550.9,898.8 551.3,899.8 551.6,900.9 552.0,901.9 552.5,903.0 552.9,904.0 553.3,905.1 553.8,906.1 554.3,907.2 554.8,908.2 555.3,909.3 555.8,910.4 556.4,911.4 557.0,912.5 557.6,913.5 558.2,914.6 558.8,915.6 559.5,916.7 560.1,917.7 560.8,918.8 561.5,919.9 562.3,920.9 563.0,922.0 563.8,923.0 564.6,924.1 565.4,925.1 566.2,926.2 567.1,927.2 568.0,928.3 568.9,929.4 569.8,930.4 570.7,931.5 571.7,932.5 572.7,933.6 573.7,934.6 574.7,935.7 575.8,936.7 576.9,937.8 578.0,938.8 579.1,939.9 580.3,941.0 581.5,942.0 582.7,943.1 583.9,944.1 585.2,945.2 586.5,946.2 587.8,947.3 589.1,948.3 590.5,949.4 591.9,950.5 593.3,951.5 594.8,952.6 596.2,953.6 597.7,954.7 599.3,955.7 600.8,956.8 602.4,957.8 604.1,958.9 605.7,959.9 607.4,961.0"/>
<polyline clip-path="url(#clip1)" fill="none" stroke="#7d4f24" stroke-width="1.3" stroke-dasharray="2.6,1.3" points="686.5,792.2 682.0,793.3 677.7,794.3 673.5,795.4 669.4,796.4 665.4,797.5 661.5,798.5 657.8,799.6 654.1,800.6 650.6,801.7 647.1,802.8 643.7,803.8 640.5,804.9 637.3,805.9 634.2,807.0 631.2,808.0 628.3,809.1 625.5,810.1 622.7,811.2 620.1,812.2 617.5,813.3 615.0,814.4 612.6,815.4 610.2,816.5 607.9,817.5 605.7,818.6 603.6,819.6 601.5,820.7 599.5,821.7 597.6,822.8 595.7,823.9 593.9,824.9 592.1,826.0 590.4,827.0 588.8,828.1 587.2,829.1 585.7,830.2 584.2,831.2 582.8,832.3 581.4,833.3 580.1,834.4 578.8,835.5 577.6,836.5 576.4,837.6 575.3,838.6 574.2,839.7 573.1,840.7 572.1,841.8 571.2,842.8 570.2,843.9 569.4,845.0 568.5,846.0 567.7,847.1 566.9,848.1 566.2,849.2 565.5,850.2 564.8,851.3 564.2,852.3 563.6,853.4 563.0,854.4 562.4,855.5 561.9,856.6 561.4,857.6 561.0,858.7 560.6,859.7 560.2,860.8 559.8,861.8 559.4,862.9 559.1,863.9 558.8,865.0 558.6,866.1 558.3,867.1 558.1,868.2 557.9,869.2 557.8,870.3 557.6,871.3 557.5,872.4 557.4,873.4 557.4,874.5 557.3,875.5 557.3,876.6 557.3,877.7 557.4,878.7 557.4,879.8 557.5,880.8 557.6,881.9 557.8,882.9 557.9,884.0 558.1,885.0 558.3,886.1 558.6,887.1 558.8,888.2 559.1,889.3 559.4,890.3 559.8,891.4 560.2,892.4 560.6,893.5 561.0,894.5 561.4,895.6 561.9,896.6 562.4,897.7 563.0,898.8 563.6,899.8 564.2,900.9 564.8,901.9 565.5,903.0 566.2,904.0 566.9,905.1 567.7,906.1 568.5,907.2 569.4,908.2 570.2,909.3 571.2,910.4 572.1,911.4 573.1,912.5 574.2,913.5 575.3,914.6 576.4,915.6 577.6,916.7 578.8,917.7 580.1,918.8 581.4,919.9 582.8,920.9 584.2,922.0 585.7,923.0 587.2,924.1 588.8,925.1 590.4,926.2 592.1,927.2 593.9,928.3 595.7,929.4 597.6,930.4 599.5,931.5 601.5,932.5 603.6,933.6 605.7,934.6 607.9,935.7 610.2,936.7 612.6,937.8 615.0,938.8 617.5,939.9 620.1,941.0 622.7,942.0 625.5,943.1 628.3,944.1 631.2,945.2 634.2,946.2 637.3,947.3 640.5,948.3 643.7,949.4 647.1,950.5 650.6,951.5 654.1,952.6 657.8,953.6 661.5,954.7 665.4,955.7 669.4,956.8 673.5,957.8 677.7,958.9 682.0,959.9 686.5,961.0"/>
<path stroke="#333" stroke-width="1" fill="none" d="M505.6 802.5h4M501.6 813.5h8M505.6 823.5h4M501.6 834.5h8M505.6 844.5h4M501.6 855.5h8M505.6 866.5h4M501.6 876.5h8M505.6 887.5h4M501.6 897.5h8M505.6 908.5h4M501.6 918.5h8M505.6 929.5h4M501.6 939.5h8M505.6 950.5h4M660.5 950.3v4M649.5 950.3v4M638.5 950.3v8M628.5 950.3v4M617.5 950.3v4M606.5 950.3v4M596.5 950.3v4M585.5 950.3v8M574.5 950.3v4M564.5 950.3v4M553.5 950.3v4M542.5 950.3v4M531.5 950.3v8M521.5 950.3v4M510.5 950.3v4"/>
<text x="476.80" y="817.60" font-size="12.4" textLength="19.63" lengthAdjust="spacing" fill="#404040" xml:space="preserve" >60.</text>
<text x="476.90" y="838.70" font-size="12.4" textLength="19.53" lengthAdjust="spacing" fill="#404040" xml:space="preserve" >40.</text>
<text x="476.90" y="859.80" font-size="12.4" textLength="19.52" lengthAdjust="spacing" fill="#404040" xml:space="preserve" >20.</text>
<text x="484.90" y="880.90" font-size="12.4" textLength="11.45" lengthAdjust="spacing" fill="#404040" xml:space="preserve" >0.</text>
<rect x="471.18" y="897.80" width="5.1" height="1.1" fill="#404040"/>
<text x="476.90" y="902.00" font-size="12.4" textLength="19.52" lengthAdjust="spacing" fill="#404040" xml:space="preserve" >20.</text>
<rect x="471.18" y="918.90" width="5.1" height="1.1" fill="#404040"/>
<text x="476.90" y="923.10" font-size="12.4" textLength="19.53" lengthAdjust="spacing" fill="#404040" xml:space="preserve" >40.</text>
<rect x="471.18" y="940.00" width="5.1" height="1.1" fill="#404040"/>
<text x="476.80" y="944.20" font-size="12.4" textLength="19.63" lengthAdjust="spacing" fill="#404040" xml:space="preserve" >60.</text>
<text x="521.44" y="973.70" font-size="12.4" textLength="19.42" lengthAdjust="spacing" fill="#404040" xml:space="preserve" >50.</text>
<text x="578.89" y="973.70" font-size="12.4" textLength="11.45" lengthAdjust="spacing" fill="#404040" xml:space="preserve" >0.</text>
<rect x="625.77" y="969.50" width="5.1" height="1.1" fill="#404040"/>
<text x="631.60" y="973.70" font-size="12.4" textLength="19.42" lengthAdjust="spacing" fill="#404040" xml:space="preserve" >50.</text>
<text x="564.49" y="992.00" font-size="12.4" textLength="39.14" lengthAdjust="spacingAndGlyphs" fill="#404040" xml:space="preserve" >KSM–X</text>
<g transform="translate(461.20,876.60) rotate(-90)">
<text x="-19.56" y="0.00" font-size="12.4" textLength="38.46" lengthAdjust="spacingAndGlyphs" fill="#404040" xml:space="preserve" >KSM–Z</text>
</g>
<circle cx="585.40" cy="876.60" r="1.5" fill="none" stroke="#000" stroke-width="0.8"/>
<polyline fill="none" stroke="#000" stroke-width="1.5" points="565.0,884.3 586.0,877.0 606.8,869.1"/>
<circle cx="597.5" cy="872.3" r="2.5" fill="#ff0000"/>
<polyline fill="none" stroke="#000" stroke-width="1.4" points="645.5,847.4 648.0,851.0 650.0,857.0 649.8,863.0 648.5,868.4"/>
<rect x="647.5" y="854" width="5" height="7" fill="#0000dd" />
<path d="M645 853 L654 862 M654 853 L645 862" stroke="#ff3030" stroke-width="1.3"/>
<rect x="803.7" y="802.6" width="150.80" height="147.70" fill="none" stroke="#222" stroke-width="1.2"/>
<path stroke="#333" stroke-width="1" fill="none" d="M795.7 950.5h8M799.7 948.5h4M799.7 946.5h4M799.7 944.5h4M799.7 943.5h4M799.7 941.5h4M799.7 939.5h4M799.7 937.5h4M799.7 935.5h4M799.7 933.5h4M795.7 931.5h8M799.7 930.5h4M799.7 928.5h4M799.7 926.5h4M799.7 924.5h4M799.7 922.5h4M799.7 920.5h4M799.7 919.5h4M799.7 917.5h4M799.7 915.5h4M795.7 913.5h8M799.7 911.5h4M799.7 909.5h4M799.7 907.5h4M799.7 906.5h4M799.7 904.5h4M799.7 902.5h4M799.7 900.5h4M799.7 898.5h4M799.7 896.5h4M795.7 895.5h8M799.7 893.5h4M799.7 891.5h4M799.7 889.5h4M799.7 887.5h4M799.7 885.5h4M799.7 883.5h4M799.7 882.5h4M799.7 880.5h4M799.7 878.5h4M795.7 876.5h8M799.7 874.5h4M799.7 872.5h4M799.7 871.5h4M799.7 869.5h4M799.7 867.5h4M799.7 865.5h4M799.7 863.5h4M799.7 861.5h4M799.7 859.5h4M795.7 858.5h8M799.7 856.5h4M799.7 854.5h4M799.7 852.5h4M799.7 850.5h4M799.7 848.5h4M799.7 847.5h4M799.7 845.5h4M799.7 843.5h4M799.7 841.5h4M795.7 839.5h8M799.7 837.5h4M799.7 835.5h4M799.7 834.5h4M799.7 832.5h4M799.7 830.5h4M799.7 828.5h4M799.7 826.5h4M799.7 824.5h4M799.7 823.5h4M795.7 821.5h8M799.7 819.5h4M799.7 817.5h4M799.7 815.5h4M799.7 813.5h4M799.7 811.5h4M799.7 810.5h4M799.7 808.5h4M799.7 806.5h4M799.7 804.5h4M795.7 802.5h8M803.5 950.3v8M822.5 950.3v4M841.5 950.3v8M860.5 950.3v4M879.5 950.3v8M898.5 950.3v4M916.5 950.3v8M935.5 950.3v4M954.5 950.3v8"/>
<rect x="764.88" y="950.55" width="5.1" height="1.1" fill="#404040"/>
<text x="770.60" y="954.75" font-size="12.4" textLength="19.53" lengthAdjust="spacing" fill="#404040" xml:space="preserve" >40.</text>
<rect x="764.88" y="932.09" width="5.1" height="1.1" fill="#404040"/>
<text x="770.70" y="936.29" font-size="12.4" textLength="19.42" lengthAdjust="spacing" fill="#404040" xml:space="preserve" >30.</text>
<rect x="764.88" y="913.62" width="5.1" height="1.1" fill="#404040"/>
<text x="770.60" y="917.82" font-size="12.4" textLength="19.52" lengthAdjust="spacing" fill="#404040" xml:space="preserve" >20.</text>
<rect x="764.88" y="895.16" width="5.1" height="1.1" fill="#404040"/>
<text x="770.71" y="899.36" font-size="12.4" textLength="19.41" lengthAdjust="spacing" fill="#404040" xml:space="preserve" >10.</text>
<text x="778.60" y="880.90" font-size="12.4" textLength="11.45" lengthAdjust="spacing" fill="#404040" xml:space="preserve" >0.</text>
<text x="770.71" y="862.44" font-size="12.4" textLength="19.41" lengthAdjust="spacing" fill="#404040" xml:space="preserve" >10.</text>
<text x="770.60" y="843.98" font-size="12.4" textLength="19.52" lengthAdjust="spacing" fill="#404040" xml:space="preserve" >20.</text>
<text x="770.70" y="825.51" font-size="12.4" textLength="19.42" lengthAdjust="spacing" fill="#404040" xml:space="preserve" >30.</text>
<text x="770.60" y="807.05" font-size="12.4" textLength="19.53" lengthAdjust="spacing" fill="#404040" xml:space="preserve" >40.</text>
<rect x="790.77" y="969.50" width="5.1" height="1.1" fill="#404040"/>
<text x="796.49" y="973.70" font-size="12.4" textLength="19.53" lengthAdjust="spacing" fill="#404040" xml:space="preserve" >40.</text>
<rect x="828.42" y="969.50" width="5.1" height="1.1" fill="#404040"/>
<text x="834.15" y="973.70" font-size="12.4" textLength="19.52" lengthAdjust="spacing" fill="#404040" xml:space="preserve" >20.</text>
<text x="872.69" y="973.70" font-size="12.4" textLength="11.45" lengthAdjust="spacing" fill="#404040" xml:space="preserve" >0.</text>
<text x="906.29" y="973.70" font-size="12.4" textLength="19.52" lengthAdjust="spacing" fill="#404040" xml:space="preserve" >20.</text>
<text x="944.09" y="973.70" font-size="12.4" textLength="19.53" lengthAdjust="spacing" fill="#404040" xml:space="preserve" >40.</text>
<text x="859.02" y="992.00" font-size="12.4" textLength="37.69" lengthAdjust="spacingAndGlyphs" fill="#404040" xml:space="preserve" >KSM–Y</text>
<g transform="translate(755.60,876.60) rotate(-90)">
<text x="-19.25" y="0.00" font-size="12.4" textLength="37.84" lengthAdjust="spacingAndGlyphs" fill="#404040" xml:space="preserve" >KSM–Z</text>
</g>
<ellipse cx="880.4" cy="876.5" rx="37.6" ry="12.3" fill="none" stroke="#000" stroke-width="1.3"/>
<circle cx="879.20" cy="876.60" r="1.8" fill="none" stroke="#000" stroke-width="0.8"/>
<circle cx="911.6" cy="869.5" r="2.5" fill="#ff0000"/>
<polyline fill="none" stroke="#000" stroke-width="1.3" points="852.4,824.0 861.0,834.0 870.0,844.5 880.0,856.0 887.1,864.5"/>
<ellipse cx="869.2" cy="843" rx="5.2" ry="2.8" transform="rotate(50 869.2 843)" fill="#0000e0"/>
<path d="M866 839 L875 848 M875 839 L866 848" stroke="#ff3030" stroke-width="1.3"/>
</svg></body></html>
